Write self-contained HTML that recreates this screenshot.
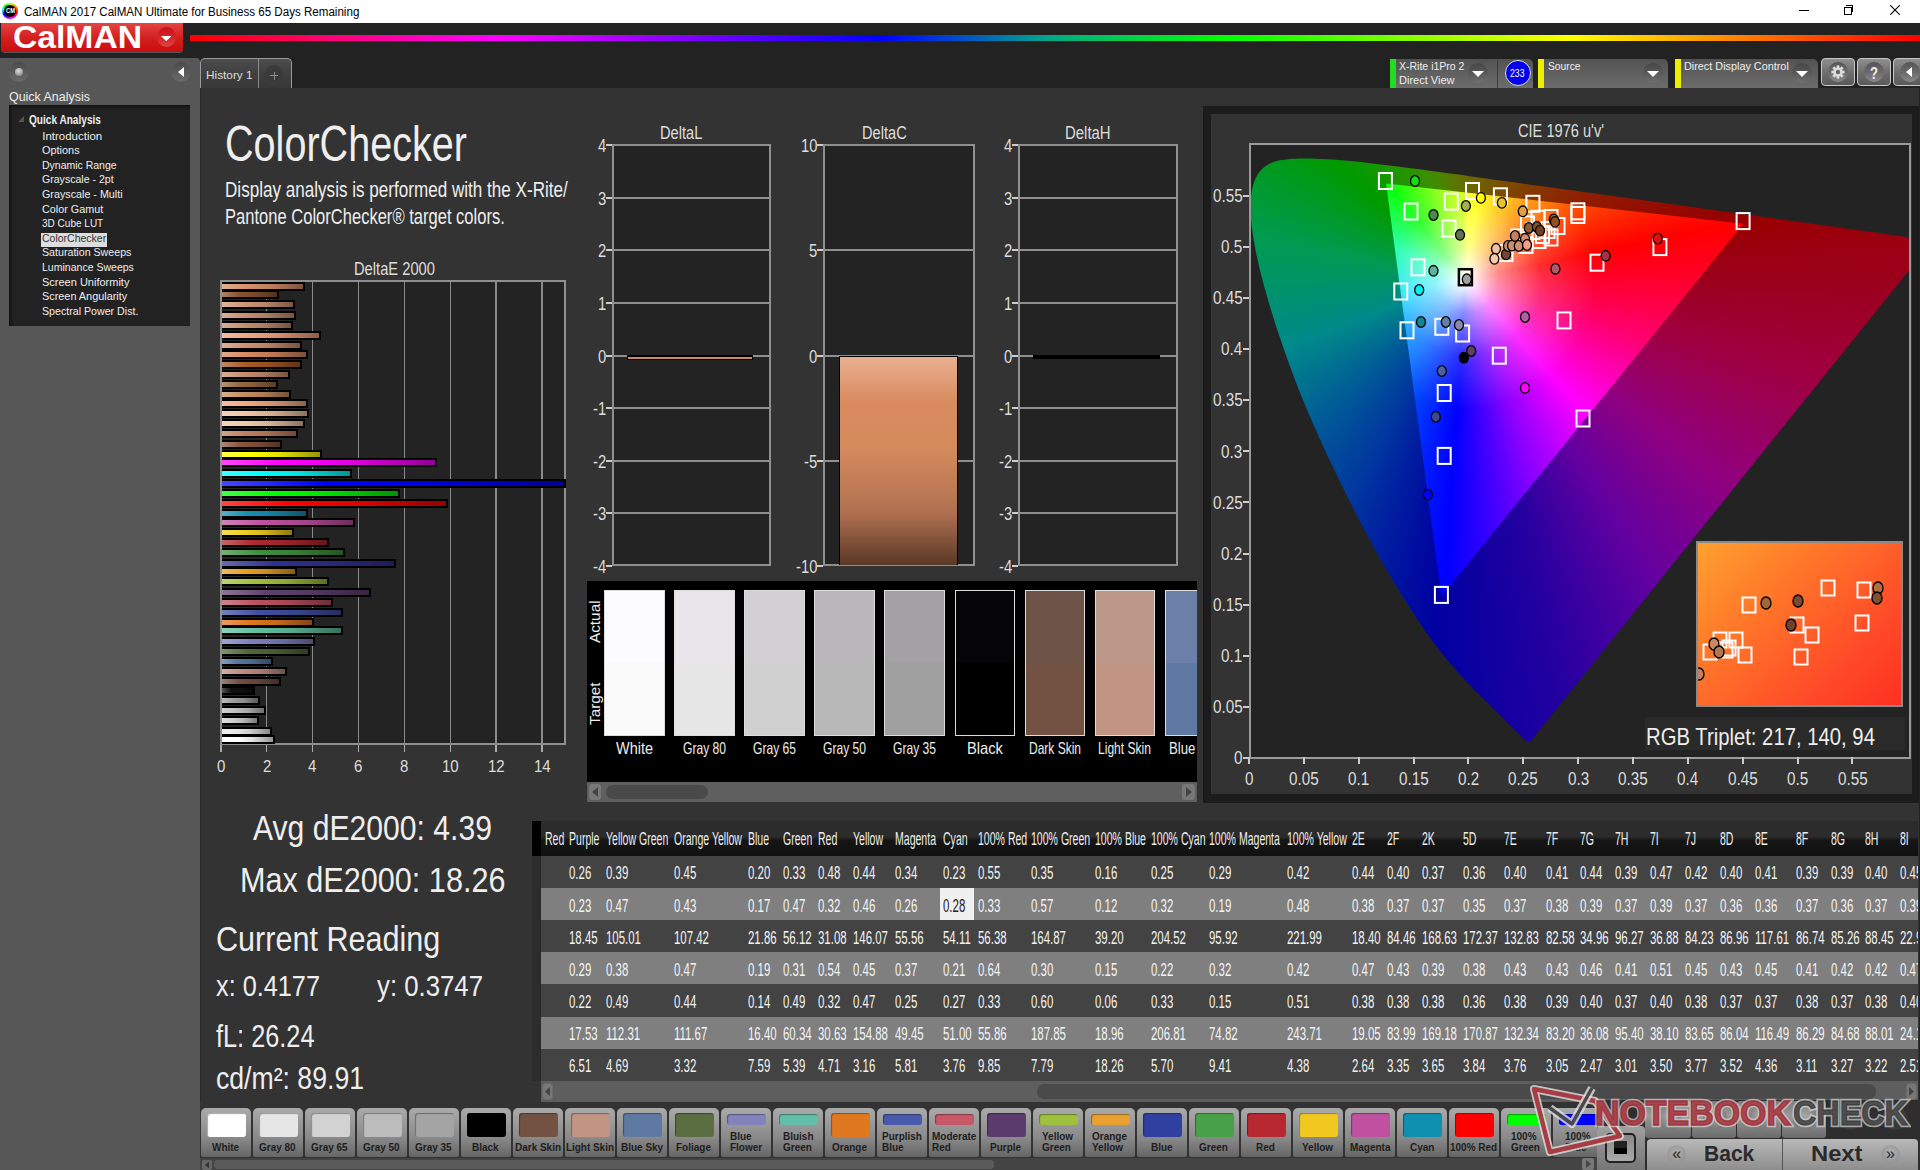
<!DOCTYPE html><html><head><meta charset="utf-8"><style>
html,body{margin:0;padding:0;width:1920px;height:1170px;overflow:hidden;background:#222;font-family:"Liberation Sans",sans-serif}
.a{position:absolute}
.t{position:absolute;line-height:1;white-space:nowrap;transform-origin:0 0}
</style></head><body>
<div class="a" style="left:0px;top:0px;width:1920px;height:23px;background:#fff"></div>
<div class="a" style="left:2px;top:3px;width:16px;height:16px;border-radius:50%;background:conic-gradient(#bf0 0deg,#f80 50deg,#f00 100deg,#f0f 170deg,#80f 210deg,#00f 240deg,#0ff 280deg,#0f0 320deg,#bf0 360deg)"></div>
<div class="a" style="left:4px;top:5px;width:12px;height:12px;border-radius:50%;background:#000"></div>
<div class="t" style="left:5.50px;top:7.13px;font-size:7.99px;color:#fff;font-weight:bold;transform:scaleX(0.7239);">CM</div>
<div class="t" style="left:23.50px;top:5.66px;font-size:12.21px;color:#000;transform:scaleX(0.9490);">CalMAN 2017 CalMAN Ultimate for Business 65 Days Remaining</div>
<div class="a" style="left:1799px;top:10px;width:10px;height:1px;background:#000"></div>
<div class="a" style="left:1844px;top:7px;width:6px;height:6px;border:1px solid #000"></div>
<div class="a" style="left:1846px;top:5px;width:6px;height:6px;border-top:1px solid #000;border-right:1px solid #000"></div>
<svg class="a" style="left:1890px;top:5px" width="10" height="10"><path d="M0.3 0.3L9.7 9.7M9.7 0.3L0.3 9.7" stroke="#000" stroke-width="1.1"/></svg>
<div class="a" style="left:0px;top:23px;width:1920px;height:34px;background:#222"></div>
<div class="a" style="left:1px;top:23px;width:182px;height:29px;border-radius:0 0 4px 4px;background:linear-gradient(#e54444,#d42020 50%,#c80e0e);box-shadow:0 1px 0 #555"></div>
<div class="t" style="left:13.30px;top:21.54px;font-size:31.83px;color:#fff;font-weight:bold;transform:scaleX(1.0572);">CalMAN</div>
<div class="a" style="left:156.5px;top:27px;width:19px;height:20px;border-radius:50%;background:linear-gradient(#c80f1c,#d62428 50%,#e04444)"></div>
<svg class="a" style="left:160.8px;top:36px" width="10.5" height="5.2"><path d="M0 0H10.5L5.25 5.2Z" fill="#fff"/></svg>
<div class="a" style="left:190px;top:35px;width:1730px;height:5.6px;background:linear-gradient(90deg,#f00 0%,#f0f 17.7%,#00f 40%,#0a8 49.7%,#0f0 60%,#ff0 79.8%,#f80 89%,#f00 100%)"></div>
<div class="a" style="left:0;top:58px;width:200px;height:1112px;background:#575757;border-radius:0 4px 0 0"></div>
<div class="a" style="left:9px;top:62px;width:20px;height:20px;border-radius:50%;background:linear-gradient(#4c4c4c,#5a5a5a 50%,#6a6a6a)"></div>
<div class="a" style="left:15px;top:68px;width:7.5px;height:7.5px;border-radius:50%;background:radial-gradient(circle at 45% 35%,#ddd,#888 80%)"></div>
<div class="a" style="left:171px;top:62px;width:20px;height:20px;border-radius:50%;background:linear-gradient(#4c4c4c,#5a5a5a 50%,#6a6a6a)"></div>
<svg class="a" style="left:177.5px;top:66.5px" width="6" height="10"><path d="M6 0V10L0 5Z" fill="#fff"/></svg>
<div class="t" style="left:9.20px;top:90.98px;font-size:12.06px;color:#eee;transform:scaleX(1.0326);">Quick Analysis</div>
<div class="a" style="left:9px;top:105px;width:181px;height:221px;background:#222;box-shadow:inset 2px 2px 3px #111"></div>
<svg class="a" style="left:18px;top:116px" width="6" height="6"><path d="M6 0V6H0Z" fill="#555"/></svg>
<div class="t" style="left:29.10px;top:114.18px;font-size:12.06px;color:#eee;font-weight:bold;transform:scaleX(0.8367);">Quick Analysis</div>
<div class="t" style="left:42.30px;top:130.57px;font-size:11.48px;color:#eee;">Introduction</div>
<div class="t" style="left:42.30px;top:145.17px;font-size:11.48px;color:#eee;transform:scaleX(0.9527);">Options</div>
<div class="t" style="left:42.30px;top:159.77px;font-size:11.48px;color:#eee;transform:scaleX(0.9144);">Dynamic Range</div>
<div class="t" style="left:42.30px;top:174.37px;font-size:11.48px;color:#eee;transform:scaleX(0.9209);">Grayscale - 2pt</div>
<div class="t" style="left:42.30px;top:188.97px;font-size:11.48px;color:#eee;transform:scaleX(0.9369);">Grayscale - Multi</div>
<div class="t" style="left:42.30px;top:203.57px;font-size:11.48px;color:#eee;transform:scaleX(0.9418);">Color Gamut</div>
<div class="t" style="left:42.30px;top:218.17px;font-size:11.48px;color:#eee;transform:scaleX(0.8732);">3D Cube LUT</div>
<div class="a" style="left:41px;top:233.10000000000002px;width:66px;height:14px;background:#ddd"></div>
<div class="t" style="left:42.30px;top:232.77px;font-size:11.48px;color:#333;transform:scaleX(0.9146);">ColorChecker</div>
<div class="t" style="left:42.30px;top:247.37px;font-size:11.48px;color:#eee;transform:scaleX(0.9286);">Saturation Sweeps</div>
<div class="t" style="left:42.30px;top:261.97px;font-size:11.48px;color:#eee;transform:scaleX(0.9180);">Luminance Sweeps</div>
<div class="t" style="left:42.30px;top:276.57px;font-size:11.48px;color:#eee;transform:scaleX(0.9589);">Screen Uniformity</div>
<div class="t" style="left:42.30px;top:291.17px;font-size:11.48px;color:#eee;transform:scaleX(0.9478);">Screen Angularity</div>
<div class="t" style="left:42.30px;top:305.77px;font-size:11.48px;color:#eee;transform:scaleX(0.9277);">Spectral Power Dist.</div>
<div class="a" style="left:200px;top:58px;width:92px;height:30px;border-radius:5px 5px 0 0;background:linear-gradient(#4c4c4c,#3e3e3e 60%,#383838);border:1px solid #9a9a9a;border-bottom:none;box-sizing:border-box"></div>
<div class="a" style="left:258px;top:59px;width:1px;height:29px;background:#8a8a8a"></div>
<div class="a" style="left:264px;top:65px;width:20px;height:20px;border-radius:50%;background:radial-gradient(circle at 50% 45%,#3a3a3a 50%,#434343)"></div>
<div class="a" style="left:270px;top:75px;width:8px;height:1px;background:#8a8a8a"></div>
<div class="a" style="left:273.5px;top:71.5px;width:1px;height:8px;background:#8a8a8a"></div>
<div class="t" style="left:206.40px;top:68.53px;font-size:11.77px;color:#ddd;transform:scaleX(1.0032);">History 1</div>
<div class="a" style="left:200px;top:88px;width:1719px;height:1082px;background:#333"></div>
<div class="a" style="left:200px;top:88px;width:1px;height:1082px;background:#2a2a2a"></div>
<div class="t" style="left:225.00px;top:119.34px;font-size:49.42px;color:#eee;transform:scaleX(0.8010);">ColorChecker</div>
<div class="t" style="left:225.00px;top:178.69px;font-size:22.09px;color:#eee;transform:scaleX(0.7738);">Display analysis is performed with the X-Rite/</div>
<div class="t" style="left:225.00px;top:206.09px;font-size:22.09px;color:#eee;transform:scaleX(0.7494);">Pantone ColorChecker® target colors.</div>
<div class="t" style="left:353.50px;top:260.01px;font-size:18.17px;color:#ddd;transform:scaleX(0.8100);">DeltaE 2000</div>
<div class="a" style="left:221px;top:281px;width:345px;height:464px;background:#232323"></div>
<div class="a" style="left:265.95px;top:282px;width:1.5px;height:463px;background:#8a8a8a"></div>
<div class="a" style="left:311.85px;top:282px;width:1.5px;height:463px;background:#8a8a8a"></div>
<div class="a" style="left:357.75px;top:282px;width:1.5px;height:463px;background:#8a8a8a"></div>
<div class="a" style="left:403.65px;top:282px;width:1.5px;height:463px;background:#8a8a8a"></div>
<div class="a" style="left:449.55px;top:282px;width:1.5px;height:463px;background:#8a8a8a"></div>
<div class="a" style="left:495.45px;top:282px;width:1.5px;height:463px;background:#8a8a8a"></div>
<div class="a" style="left:541.35px;top:282px;width:1.5px;height:463px;background:#8a8a8a"></div>
<div class="a" style="left:220px;top:280px;width:346px;height:465px;border:2px solid #8f8f8f;box-sizing:border-box;border-right-width:2px"></div>
<div class="a" style="left:222px;top:282.4px;width:82.5px;height:8.2px;background:#000"></div>
<div class="a" style="left:222px;top:284.0px;width:80.5px;height:5px;background:linear-gradient(90deg,#e4af92,#d99068 30%,#bf7f5c 60%,#7e543c)"></div>
<div class="a" style="left:222px;top:290.4px;width:56.7px;height:8.2px;background:#000"></div>
<div class="a" style="left:222px;top:292.0px;width:54.7px;height:5px;background:linear-gradient(90deg,#ab856a,#8a5530 30%,#794b2a 60%,#50311c)"></div>
<div class="a" style="left:222px;top:300.4px;width:73.1px;height:8.2px;background:#000"></div>
<div class="a" style="left:222px;top:302.0px;width:71.1px;height:5px;background:linear-gradient(90deg,#ddb59e,#d09878 30%,#b7866a 60%,#795846)"></div>
<div class="a" style="left:222px;top:311.4px;width:74.2px;height:8.2px;background:#000"></div>
<div class="a" style="left:222px;top:313.0px;width:72.2px;height:5px;background:linear-gradient(90deg,#d7af98,#c89070 30%,#b07f63 60%,#745441)"></div>
<div class="a" style="left:222px;top:321.4px;width:70.5px;height:8.2px;background:#000"></div>
<div class="a" style="left:222px;top:323.0px;width:68.5px;height:5px;background:linear-gradient(90deg,#d5af98,#c49070 30%,#ac7f63 60%,#725441)"></div>
<div class="a" style="left:222px;top:331.4px;width:99.3px;height:8.2px;background:#000"></div>
<div class="a" style="left:222px;top:333.0px;width:97.3px;height:5px;background:linear-gradient(90deg,#f4bba4,#f0a080 30%,#d38d71 60%,#8b5d4a)"></div>
<div class="a" style="left:222px;top:341.4px;width:80.0px;height:8.2px;background:#000"></div>
<div class="a" style="left:222px;top:343.0px;width:78.0px;height:5px;background:linear-gradient(90deg,#ddaf98,#d09070 30%,#b77f63 60%,#795441)"></div>
<div class="a" style="left:222px;top:350.4px;width:85.7px;height:8.2px;background:#000"></div>
<div class="a" style="left:222px;top:352.0px;width:83.7px;height:5px;background:linear-gradient(90deg,#e3a98d,#d88860 30%,#be7854 60%,#7d4f38)"></div>
<div class="a" style="left:222px;top:360.4px;width:79.5px;height:8.2px;background:#000"></div>
<div class="a" style="left:222px;top:362.0px;width:77.5px;height:5px;background:linear-gradient(90deg,#c08864,#a85a28 30%,#944f23 60%,#613417)"></div>
<div class="a" style="left:222px;top:370.4px;width:68.2px;height:8.2px;background:#000"></div>
<div class="a" style="left:222px;top:372.0px;width:66.2px;height:5px;background:linear-gradient(90deg,#d7af98,#c89070 30%,#b07f63 60%,#745441)"></div>
<div class="a" style="left:222px;top:380.4px;width:55.8px;height:8.2px;background:#000"></div>
<div class="a" style="left:222px;top:382.0px;width:53.8px;height:5px;background:linear-gradient(90deg,#b69475,#9a6a40 30%,#885d38 60%,#593d25)"></div>
<div class="a" style="left:222px;top:390.4px;width:69.1px;height:8.2px;background:#000"></div>
<div class="a" style="left:222px;top:392.0px;width:67.1px;height:5px;background:linear-gradient(90deg,#d7af8d,#c89060 30%,#b07f54 60%,#745438)"></div>
<div class="a" style="left:222px;top:399.4px;width:85.5px;height:8.2px;background:#000"></div>
<div class="a" style="left:222px;top:401.0px;width:83.5px;height:5px;background:linear-gradient(90deg,#f4c0a4,#f0a880 30%,#d39471 60%,#8b614a)"></div>
<div class="a" style="left:222px;top:409.4px;width:87.3px;height:8.2px;background:#000"></div>
<div class="a" style="left:222px;top:411.0px;width:85.3px;height:5px;background:linear-gradient(90deg,#f4d5bd,#f0c4a4 30%,#d3ac90 60%,#8b725f)"></div>
<div class="a" style="left:222px;top:419.4px;width:82.9px;height:8.2px;background:#000"></div>
<div class="a" style="left:222px;top:421.0px;width:80.9px;height:5px;background:linear-gradient(90deg,#f4d7c0,#f0c8a8 30%,#d3b094 60%,#8b7461)"></div>
<div class="a" style="left:222px;top:429.4px;width:76.1px;height:8.2px;background:#000"></div>
<div class="a" style="left:222px;top:431.0px;width:74.1px;height:5px;background:linear-gradient(90deg,#d2a48d,#c08060 30%,#a97154 60%,#6f4a38)"></div>
<div class="a" style="left:222px;top:440.4px;width:59.7px;height:8.2px;background:#000"></div>
<div class="a" style="left:222px;top:442.0px;width:57.7px;height:5px;background:linear-gradient(90deg,#ab8775,#8a5840 30%,#794d38 60%,#503325)"></div>
<div class="a" style="left:222px;top:450.4px;width:99.7px;height:8.2px;background:#000"></div>
<div class="a" style="left:222px;top:452.0px;width:97.7px;height:5px;background:linear-gradient(90deg,#ffff47,#ffff00 30%,#e0e000 60%,#949400)"></div>
<div class="a" style="left:222px;top:458.4px;width:215.4px;height:8.2px;background:#000"></div>
<div class="a" style="left:222px;top:460.0px;width:213.4px;height:5px;background:linear-gradient(90deg,#ff47ff,#ff00ff 30%,#e000e0 60%,#940094)"></div>
<div class="a" style="left:222px;top:469.4px;width:130.1px;height:8.2px;background:#000"></div>
<div class="a" style="left:222px;top:471.0px;width:128.1px;height:5px;background:linear-gradient(90deg,#47ffff,#00ffff 30%,#00e0e0 60%,#009494)"></div>
<div class="a" style="left:222px;top:479.4px;width:344.0px;height:8.2px;background:#000"></div>
<div class="a" style="left:222px;top:481.0px;width:342.0px;height:5px;background:linear-gradient(90deg,#4747ff,#0000ff 30%,#0000e0 60%,#000094)"></div>
<div class="a" style="left:222px;top:489.4px;width:178.2px;height:8.2px;background:#000"></div>
<div class="a" style="left:222px;top:491.0px;width:176.2px;height:5px;background:linear-gradient(90deg,#47ff47,#00ff00 30%,#00e000 60%,#009400)"></div>
<div class="a" style="left:222px;top:499.4px;width:225.5px;height:8.2px;background:#000"></div>
<div class="a" style="left:222px;top:501.0px;width:223.5px;height:5px;background:linear-gradient(90deg,#ff4747,#ff0000 30%,#e00000 60%,#940000)"></div>
<div class="a" style="left:222px;top:509.4px;width:85.5px;height:8.2px;background:#000"></div>
<div class="a" style="left:222px;top:511.0px;width:83.5px;height:5px;background:linear-gradient(90deg,#59afc6,#1890b0 30%,#157f9b 60%,#0e5466)"></div>
<div class="a" style="left:222px;top:518.4px;width:132.6px;height:8.2px;background:#000"></div>
<div class="a" style="left:222px;top:520.0px;width:130.6px;height:5px;background:linear-gradient(90deg,#d281bb,#c050a0 30%,#a9468d 60%,#6f2e5d)"></div>
<div class="a" style="left:222px;top:528.4px;width:71.7px;height:8.2px;background:#000"></div>
<div class="a" style="left:222px;top:530.0px;width:69.7px;height:5px;background:linear-gradient(90deg,#f4dd5e,#f0d020 30%,#d3b71c 60%,#8b7913)"></div>
<div class="a" style="left:222px;top:538.4px;width:107.3px;height:8.2px;background:#000"></div>
<div class="a" style="left:222px;top:540.0px;width:105.3px;height:5px;background:linear-gradient(90deg,#c6646a,#b02830 30%,#9b232a 60%,#66171c)"></div>
<div class="a" style="left:222px;top:548.4px;width:123.0px;height:8.2px;background:#000"></div>
<div class="a" style="left:222px;top:550.0px;width:121.0px;height:5px;background:linear-gradient(90deg,#75af75,#409040 30%,#387f38 60%,#255425)"></div>
<div class="a" style="left:222px;top:559.4px;width:173.6px;height:8.2px;background:#000"></div>
<div class="a" style="left:222px;top:561.0px;width:171.6px;height:5px;background:linear-gradient(90deg,#6a6aaf,#303090 30%,#2a2a7f 60%,#1c1c54)"></div>
<div class="a" style="left:222px;top:567.4px;width:75.4px;height:8.2px;background:#000"></div>
<div class="a" style="left:222px;top:569.0px;width:73.4px;height:5px;background:linear-gradient(90deg,#eebb5e,#e8a020 30%,#cc8d1c 60%,#875d13)"></div>
<div class="a" style="left:222px;top:577.4px;width:106.9px;height:8.2px;background:#000"></div>
<div class="a" style="left:222px;top:579.0px;width:104.9px;height:5px;background:linear-gradient(90deg,#bbd275,#a0c040 30%,#8da938 60%,#5d6f25)"></div>
<div class="a" style="left:222px;top:588.4px;width:148.7px;height:8.2px;background:#000"></div>
<div class="a" style="left:222px;top:590.0px;width:146.7px;height:5px;background:linear-gradient(90deg,#8d7598,#604070 30%,#543863 60%,#382541)"></div>
<div class="a" style="left:222px;top:598.4px;width:111.0px;height:8.2px;background:#000"></div>
<div class="a" style="left:222px;top:600.0px;width:109.0px;height:5px;background:linear-gradient(90deg,#d2818d,#c05060 30%,#a94654 60%,#6f2e38)"></div>
<div class="a" style="left:222px;top:608.4px;width:120.9px;height:8.2px;background:#000"></div>
<div class="a" style="left:222px;top:610.0px;width:118.9px;height:5px;background:linear-gradient(90deg,#7581bb,#4050a0 30%,#38468d 60%,#252e5d)"></div>
<div class="a" style="left:222px;top:618.4px;width:91.9px;height:8.2px;background:#000"></div>
<div class="a" style="left:222px;top:620.0px;width:89.9px;height:5px;background:linear-gradient(90deg,#e99e5e,#e07820 30%,#c56a1c 60%,#824613)"></div>
<div class="a" style="left:222px;top:626.4px;width:120.9px;height:8.2px;background:#000"></div>
<div class="a" style="left:222px;top:628.0px;width:118.9px;height:5px;background:linear-gradient(90deg,#8dd2bb,#60c0a0 30%,#54a98d 60%,#386f5d)"></div>
<div class="a" style="left:222px;top:637.4px;width:93.1px;height:8.2px;background:#000"></div>
<div class="a" style="left:222px;top:639.0px;width:91.1px;height:5px;background:linear-gradient(90deg,#a4a4d2,#8080c0 30%,#7171a9 60%,#4a4a6f)"></div>
<div class="a" style="left:222px;top:647.4px;width:88.0px;height:8.2px;background:#000"></div>
<div class="a" style="left:222px;top:649.0px;width:86.0px;height:5px;background:linear-gradient(90deg,#819270,#506838 30%,#465c31 60%,#2e3c20)"></div>
<div class="a" style="left:222px;top:657.4px;width:50.5px;height:8.2px;background:#000"></div>
<div class="a" style="left:222px;top:659.0px;width:48.5px;height:5px;background:linear-gradient(90deg,#879ebb,#5878a0 30%,#4d6a8d 60%,#33465d)"></div>
<div class="a" style="left:222px;top:667.4px;width:65.0px;height:8.2px;background:#000"></div>
<div class="a" style="left:222px;top:669.0px;width:63.0px;height:5px;background:linear-gradient(90deg,#d2afa4,#c09080 30%,#a97f71 60%,#6f544a)"></div>
<div class="a" style="left:222px;top:677.4px;width:59.0px;height:8.2px;background:#000"></div>
<div class="a" style="left:222px;top:679.0px;width:57.0px;height:5px;background:linear-gradient(90deg,#988175,#705040 30%,#634638 60%,#412e25)"></div>
<div class="a" style="left:222px;top:686.4px;width:33.0px;height:8.2px;background:#000"></div>
<div class="a" style="left:222px;top:688.0px;width:31.0px;height:5px;background:linear-gradient(90deg,#535353,#101010 30%,#0e0e0e 60%,#090909)"></div>
<div class="a" style="left:222px;top:696.4px;width:37.6px;height:8.2px;background:#000"></div>
<div class="a" style="left:222px;top:698.0px;width:35.6px;height:5px;background:linear-gradient(90deg,#bbbbbb,#a0a0a0 30%,#8d8d8d 60%,#5d5d5d)"></div>
<div class="a" style="left:222px;top:706.4px;width:44.1px;height:8.2px;background:#000"></div>
<div class="a" style="left:222px;top:708.0px;width:42.1px;height:5px;background:linear-gradient(90deg,#d2d2d2,#c0c0c0 30%,#a9a9a9 60%,#6f6f6f)"></div>
<div class="a" style="left:222px;top:716.4px;width:36.9px;height:8.2px;background:#000"></div>
<div class="a" style="left:222px;top:718.0px;width:34.9px;height:5px;background:linear-gradient(90deg,#dddddd,#d0d0d0 30%,#b7b7b7 60%,#797979)"></div>
<div class="a" style="left:222px;top:727.4px;width:50.1px;height:8.2px;background:#000"></div>
<div class="a" style="left:222px;top:729.0px;width:48.1px;height:5px;background:linear-gradient(90deg,#eeeeee,#e8e8e8 30%,#cccccc 60%,#878787)"></div>
<div class="a" style="left:222px;top:735.4px;width:52.6px;height:8.2px;background:#000"></div>
<div class="a" style="left:222px;top:737.0px;width:50.6px;height:5px;background:linear-gradient(90deg,#ffffff,#ffffff 30%,#e0e0e0 60%,#949494)"></div>
<div class="a" style="left:220.05px;top:745px;width:1.5px;height:7px;background:#aaa"></div>
<div class="t" style="left:216.62px;top:759.24px;font-size:16.72px;color:#ddd;transform:scaleX(0.9000);">0</div>
<div class="a" style="left:265.95px;top:745px;width:1.5px;height:7px;background:#aaa"></div>
<div class="t" style="left:262.52px;top:759.24px;font-size:16.72px;color:#ddd;transform:scaleX(0.9000);">2</div>
<div class="a" style="left:311.85px;top:745px;width:1.5px;height:7px;background:#aaa"></div>
<div class="t" style="left:308.42px;top:759.24px;font-size:16.72px;color:#ddd;transform:scaleX(0.9000);">4</div>
<div class="a" style="left:357.75px;top:745px;width:1.5px;height:7px;background:#aaa"></div>
<div class="t" style="left:354.32px;top:759.24px;font-size:16.72px;color:#ddd;transform:scaleX(0.9000);">6</div>
<div class="a" style="left:403.65px;top:745px;width:1.5px;height:7px;background:#aaa"></div>
<div class="t" style="left:400.22px;top:759.24px;font-size:16.72px;color:#ddd;transform:scaleX(0.9000);">8</div>
<div class="a" style="left:449.55px;top:745px;width:1.5px;height:7px;background:#aaa"></div>
<div class="t" style="left:441.93px;top:759.24px;font-size:16.72px;color:#ddd;transform:scaleX(0.9000);">10</div>
<div class="a" style="left:495.45px;top:745px;width:1.5px;height:7px;background:#aaa"></div>
<div class="t" style="left:487.83px;top:759.24px;font-size:16.72px;color:#ddd;transform:scaleX(0.9000);">12</div>
<div class="a" style="left:541.35px;top:745px;width:1.5px;height:7px;background:#aaa"></div>
<div class="t" style="left:533.73px;top:759.24px;font-size:16.72px;color:#ddd;transform:scaleX(0.9000);">14</div>
<div class="t" style="left:660.45px;top:124.40px;font-size:18.90px;color:#ddd;transform:scaleX(0.7744);">DeltaL</div>
<div class="a" style="left:612px;top:144px;width:157px;height:421px;background:#232323"></div>
<div class="a" style="left:612px;top:197px;width:157px;height:2px;background:#8f8f8f"></div>
<div class="a" style="left:612px;top:249px;width:157px;height:2px;background:#8f8f8f"></div>
<div class="a" style="left:612px;top:302px;width:157px;height:2px;background:#8f8f8f"></div>
<div class="a" style="left:612px;top:355px;width:157px;height:2px;background:#8f8f8f"></div>
<div class="a" style="left:612px;top:407px;width:157px;height:2px;background:#8f8f8f"></div>
<div class="a" style="left:612px;top:460px;width:157px;height:2px;background:#8f8f8f"></div>
<div class="a" style="left:612px;top:512px;width:157px;height:2px;background:#8f8f8f"></div>
<div class="a" style="left:612px;top:144px;width:159px;height:422px;border:2px solid #8f8f8f;box-sizing:border-box"></div>
<div class="a" style="left:606px;top:144px;width:6px;height:2px;background:#ccc"></div>
<div class="t" style="left:597.75px;top:137.63px;font-size:17.44px;color:#ddd;transform:scaleX(0.8500);">4</div>
<div class="a" style="left:606px;top:197px;width:6px;height:2px;background:#ccc"></div>
<div class="t" style="left:597.75px;top:190.63px;font-size:17.44px;color:#ddd;transform:scaleX(0.8500);">3</div>
<div class="a" style="left:606px;top:249px;width:6px;height:2px;background:#ccc"></div>
<div class="t" style="left:597.75px;top:242.63px;font-size:17.44px;color:#ddd;transform:scaleX(0.8500);">2</div>
<div class="a" style="left:606px;top:302px;width:6px;height:2px;background:#ccc"></div>
<div class="t" style="left:597.75px;top:295.63px;font-size:17.44px;color:#ddd;transform:scaleX(0.8500);">1</div>
<div class="a" style="left:606px;top:355px;width:6px;height:2px;background:#ccc"></div>
<div class="t" style="left:597.75px;top:348.63px;font-size:17.44px;color:#ddd;transform:scaleX(0.8500);">0</div>
<div class="a" style="left:606px;top:407px;width:6px;height:2px;background:#ccc"></div>
<div class="t" style="left:592.82px;top:400.63px;font-size:17.44px;color:#ddd;transform:scaleX(0.8500);">-1</div>
<div class="a" style="left:606px;top:460px;width:6px;height:2px;background:#ccc"></div>
<div class="t" style="left:592.82px;top:453.63px;font-size:17.44px;color:#ddd;transform:scaleX(0.8500);">-2</div>
<div class="a" style="left:606px;top:512px;width:6px;height:2px;background:#ccc"></div>
<div class="t" style="left:592.82px;top:505.63px;font-size:17.44px;color:#ddd;transform:scaleX(0.8500);">-3</div>
<div class="a" style="left:606px;top:565px;width:6px;height:2px;background:#ccc"></div>
<div class="t" style="left:592.82px;top:558.63px;font-size:17.44px;color:#ddd;transform:scaleX(0.8500);">-4</div>
<div class="t" style="left:862.35px;top:124.40px;font-size:18.90px;color:#ddd;transform:scaleX(0.7739);">DeltaC</div>
<div class="a" style="left:823px;top:144px;width:150px;height:421px;background:#232323"></div>
<div class="a" style="left:823px;top:249px;width:150px;height:2px;background:#8f8f8f"></div>
<div class="a" style="left:823px;top:355px;width:150px;height:2px;background:#8f8f8f"></div>
<div class="a" style="left:823px;top:460px;width:150px;height:2px;background:#8f8f8f"></div>
<div class="a" style="left:823px;top:144px;width:152px;height:422px;border:2px solid #8f8f8f;box-sizing:border-box"></div>
<div class="a" style="left:817px;top:144px;width:6px;height:2px;background:#ccc"></div>
<div class="t" style="left:800.51px;top:137.63px;font-size:17.44px;color:#ddd;transform:scaleX(0.8500);">10</div>
<div class="a" style="left:817px;top:249px;width:6px;height:2px;background:#ccc"></div>
<div class="t" style="left:808.75px;top:242.63px;font-size:17.44px;color:#ddd;transform:scaleX(0.8500);">5</div>
<div class="a" style="left:817px;top:355px;width:6px;height:2px;background:#ccc"></div>
<div class="t" style="left:808.75px;top:348.63px;font-size:17.44px;color:#ddd;transform:scaleX(0.8500);">0</div>
<div class="a" style="left:817px;top:460px;width:6px;height:2px;background:#ccc"></div>
<div class="t" style="left:803.82px;top:453.63px;font-size:17.44px;color:#ddd;transform:scaleX(0.8500);">-5</div>
<div class="a" style="left:817px;top:565px;width:6px;height:2px;background:#ccc"></div>
<div class="t" style="left:795.57px;top:558.63px;font-size:17.44px;color:#ddd;transform:scaleX(0.8500);">-10</div>
<div class="t" style="left:1065.00px;top:124.40px;font-size:18.90px;color:#ddd;transform:scaleX(0.7895);">DeltaH</div>
<div class="a" style="left:1018px;top:144px;width:158px;height:421px;background:#232323"></div>
<div class="a" style="left:1018px;top:197px;width:158px;height:2px;background:#8f8f8f"></div>
<div class="a" style="left:1018px;top:249px;width:158px;height:2px;background:#8f8f8f"></div>
<div class="a" style="left:1018px;top:302px;width:158px;height:2px;background:#8f8f8f"></div>
<div class="a" style="left:1018px;top:355px;width:158px;height:2px;background:#8f8f8f"></div>
<div class="a" style="left:1018px;top:407px;width:158px;height:2px;background:#8f8f8f"></div>
<div class="a" style="left:1018px;top:460px;width:158px;height:2px;background:#8f8f8f"></div>
<div class="a" style="left:1018px;top:512px;width:158px;height:2px;background:#8f8f8f"></div>
<div class="a" style="left:1018px;top:144px;width:160px;height:422px;border:2px solid #8f8f8f;box-sizing:border-box"></div>
<div class="a" style="left:1012px;top:144px;width:6px;height:2px;background:#ccc"></div>
<div class="t" style="left:1003.75px;top:137.63px;font-size:17.44px;color:#ddd;transform:scaleX(0.8500);">4</div>
<div class="a" style="left:1012px;top:197px;width:6px;height:2px;background:#ccc"></div>
<div class="t" style="left:1003.75px;top:190.63px;font-size:17.44px;color:#ddd;transform:scaleX(0.8500);">3</div>
<div class="a" style="left:1012px;top:249px;width:6px;height:2px;background:#ccc"></div>
<div class="t" style="left:1003.75px;top:242.63px;font-size:17.44px;color:#ddd;transform:scaleX(0.8500);">2</div>
<div class="a" style="left:1012px;top:302px;width:6px;height:2px;background:#ccc"></div>
<div class="t" style="left:1003.75px;top:295.63px;font-size:17.44px;color:#ddd;transform:scaleX(0.8500);">1</div>
<div class="a" style="left:1012px;top:355px;width:6px;height:2px;background:#ccc"></div>
<div class="t" style="left:1003.75px;top:348.63px;font-size:17.44px;color:#ddd;transform:scaleX(0.8500);">0</div>
<div class="a" style="left:1012px;top:407px;width:6px;height:2px;background:#ccc"></div>
<div class="t" style="left:998.82px;top:400.63px;font-size:17.44px;color:#ddd;transform:scaleX(0.8500);">-1</div>
<div class="a" style="left:1012px;top:460px;width:6px;height:2px;background:#ccc"></div>
<div class="t" style="left:998.82px;top:453.63px;font-size:17.44px;color:#ddd;transform:scaleX(0.8500);">-2</div>
<div class="a" style="left:1012px;top:512px;width:6px;height:2px;background:#ccc"></div>
<div class="t" style="left:998.82px;top:505.63px;font-size:17.44px;color:#ddd;transform:scaleX(0.8500);">-3</div>
<div class="a" style="left:1012px;top:565px;width:6px;height:2px;background:#ccc"></div>
<div class="t" style="left:998.82px;top:558.63px;font-size:17.44px;color:#ddd;transform:scaleX(0.8500);">-4</div>
<div class="a" style="left:627px;top:355px;width:126px;height:5px;background:#000"></div>
<div class="a" style="left:628px;top:357px;width:124px;height:1.5px;background:#d08860"></div>
<div class="a" style="left:839px;top:356px;width:119px;height:209px;background:linear-gradient(#000 0,#000 1px,#e8b090 1px,#d98b5e 22%,#d48a5c 45%,#b07050 75%,#5a3826 100%);border-left:1px solid #000;border-right:1px solid #000;box-sizing:border-box"></div>
<div class="a" style="left:1033px;top:355px;width:127px;height:4px;background:#000"></div>
<div class="a" style="left:587px;top:581px;width:610px;height:201px;background:#000"></div>
<div class="t" style="left:588.29px;top:642.80px;font-size:14.53px;color:#eee;transform:rotate(-90deg) scaleX(1.0545)">Actual</div>
<div class="t" style="left:588.29px;top:725.00px;font-size:14.53px;color:#eee;transform:rotate(-90deg) scaleX(1.0521)">Target</div>
<div class="a" style="left:604.0px;top:589.5px;width:60.6px;height:146px;overflow:hidden"><div style="position:absolute;left:0;top:0;width:60.6px;height:146px;box-sizing:border-box;border:1.5px solid #ddd;background:linear-gradient(#fcfbff 50%,#fafafa 50%)"></div></div>
<div class="a" style="left:674.1px;top:589.5px;width:60.6px;height:146px;overflow:hidden"><div style="position:absolute;left:0;top:0;width:60.6px;height:146px;box-sizing:border-box;border:1.5px solid #ddd;background:linear-gradient(#e8e6ea 50%,#e6e6e6 50%)"></div></div>
<div class="a" style="left:744.2px;top:589.5px;width:60.6px;height:146px;overflow:hidden"><div style="position:absolute;left:0;top:0;width:60.6px;height:146px;box-sizing:border-box;border:1.5px solid #ddd;background:linear-gradient(#d2d0d3 50%,#d0d0d0 50%)"></div></div>
<div class="a" style="left:814.3px;top:589.5px;width:60.6px;height:146px;overflow:hidden"><div style="position:absolute;left:0;top:0;width:60.6px;height:146px;box-sizing:border-box;border:1.5px solid #ddd;background:linear-gradient(#bab8bb 50%,#b8b8b8 50%)"></div></div>
<div class="a" style="left:884.4px;top:589.5px;width:60.6px;height:146px;overflow:hidden"><div style="position:absolute;left:0;top:0;width:60.6px;height:146px;box-sizing:border-box;border:1.5px solid #ddd;background:linear-gradient(#a3a1a3 50%,#a0a0a0 50%)"></div></div>
<div class="a" style="left:954.5px;top:589.5px;width:60.6px;height:146px;overflow:hidden"><div style="position:absolute;left:0;top:0;width:60.6px;height:146px;box-sizing:border-box;border:1.5px solid #ddd;background:linear-gradient(#050508 50%,#000000 50%)"></div></div>
<div class="a" style="left:1024.6px;top:589.5px;width:60.6px;height:146px;overflow:hidden"><div style="position:absolute;left:0;top:0;width:60.6px;height:146px;box-sizing:border-box;border:1.5px solid #ddd;background:linear-gradient(#6e5448 50%,#735244 50%)"></div></div>
<div class="a" style="left:1094.7px;top:589.5px;width:60.6px;height:146px;overflow:hidden"><div style="position:absolute;left:0;top:0;width:60.6px;height:146px;box-sizing:border-box;border:1.5px solid #ddd;background:linear-gradient(#bd9888 50%,#c29582 50%)"></div></div>
<div class="a" style="left:1164.8px;top:589.5px;width:32.2px;height:146px;overflow:hidden"><div style="position:absolute;left:0;top:0;width:60.6px;height:146px;box-sizing:border-box;border:1.5px solid #ddd;background:linear-gradient(#6a80a8 50%,#5e7aa2 50%)"></div></div>
<div class="a" style="left:587px;top:782px;width:610px;height:20px;background:#5f5f5f"></div>
<div class="a" style="left:589px;top:784px;width:12px;height:16px;border-radius:3px;background:#777"></div>
<div class="a" style="left:606px;top:785px;width:102px;height:14px;border-radius:7px;background:#4a4a4a"></div>
<div class="a" style="left:1182px;top:784px;width:13px;height:16px;border-radius:3px;background:#777"></div>
<svg class="a" style="left:592px;top:787px" width="6" height="10"><path d="M6 0V10L0 5Z" fill="#444"/></svg>
<svg class="a" style="left:1186px;top:787px" width="6" height="10"><path d="M0 0V10L6 5Z" fill="#444"/></svg>
<div class="a" style="left:587px;top:581px;width:610px;height:200px;overflow:hidden">
<div class="t" style="left:28.60px;top:159.64px;font-size:16.72px;color:#eee;transform:scaleX(0.8660);">White</div>
<div class="t" style="left:96.00px;top:159.64px;font-size:16.72px;color:#eee;transform:scaleX(0.7232);">Gray 80</div>
<div class="t" style="left:166.00px;top:159.64px;font-size:16.72px;color:#eee;transform:scaleX(0.7232);">Gray 65</div>
<div class="t" style="left:236.00px;top:159.64px;font-size:16.72px;color:#eee;transform:scaleX(0.7232);">Gray 50</div>
<div class="t" style="left:306.00px;top:159.64px;font-size:16.72px;color:#eee;transform:scaleX(0.7232);">Gray 35</div>
<div class="t" style="left:379.50px;top:159.64px;font-size:16.72px;color:#eee;transform:scaleX(0.8808);">Black</div>
<div class="t" style="left:441.50px;top:159.64px;font-size:16.72px;color:#eee;transform:scaleX(0.7177);">Dark Skin</div>
<div class="t" style="left:511.00px;top:159.64px;font-size:16.72px;color:#eee;transform:scaleX(0.7220);">Light Skin</div>
<div class="t" style="left:581.50px;top:159.64px;font-size:16.72px;color:#eee;transform:scaleX(0.7883);">Blue Sky</div>
</div>
<div class="a" style="left:1203px;top:106px;width:716px;height:697px;background:#1c1c1c"></div>
<div class="a" style="left:1211px;top:114px;width:701px;height:680px;background:#333"></div>
<div class="t" style="left:1518.00px;top:121.90px;font-size:18.90px;color:#ddd;transform:scaleX(0.7734);">CIE 1976 u'v'</div>
<div class="a" style="left:1250px;top:144px;width:659px;height:613px;background:#232323;overflow:hidden">
<div class="a" style="left:0;top:0;width:659px;height:613px;background:conic-gradient(from 0deg at 216px 136px,#6a6a00 0deg,#883400 40deg,#980000 78deg,#a00040 105deg,#900080 128deg,#6400a0 148deg,#2200a0 168deg,#0000a0 185deg,#0038a0 208deg,#008a8a 250deg,#009a50 282deg,#009a00 312deg,#3a9000 340deg,#6a6a00 360deg);clip-path:path('M280.8 596.9 C280.6 597.0 280.4 597.5 279.6 597.4 C278.7 597.4 277.5 597.6 275.7 596.5 C273.9 595.3 272.2 593.7 269.0 590.6 C265.8 587.5 262.0 583.6 256.5 578.1 C251.0 572.6 241.8 563.4 236.1 557.6 C230.3 551.8 227.2 548.8 222.0 543.4 C216.8 537.9 211.1 532.1 204.9 524.8 C198.6 517.4 192.3 510.3 184.4 499.5 C176.4 488.6 167.0 475.3 157.1 459.5 C147.1 443.8 136.0 425.4 124.8 405.0 C113.6 384.6 101.3 360.7 89.8 337.2 C78.4 313.7 66.2 287.8 56.2 263.8 C46.2 239.8 37.2 215.0 29.9 193.4 C22.5 171.8 16.5 151.3 12.0 134.0 C7.5 116.7 4.7 102.3 2.8 89.9 C0.9 77.4 0.3 67.8 0.6 59.1 C0.8 50.5 2.1 43.8 4.1 38.0 C6.1 32.3 9.1 28.0 12.5 24.6 C15.8 21.2 20.0 19.3 24.4 17.8 C28.7 16.2 33.6 15.8 38.5 15.3 C43.4 14.7 48.7 14.7 53.9 14.6 C59.1 14.6 64.2 14.7 69.6 14.9 C74.9 15.0 80.3 15.4 85.9 15.8 C91.6 16.2 97.4 16.7 103.5 17.3 C109.6 17.9 115.9 18.6 122.6 19.4 C129.3 20.2 136.3 21.0 143.7 22.0 C151.1 22.9 158.8 23.9 167.0 25.0 C175.1 26.1 183.7 27.2 192.7 28.5 C201.8 29.7 211.2 31.0 221.2 32.4 C231.2 33.8 241.6 35.2 252.6 36.7 C263.5 38.2 274.9 39.8 286.8 41.5 C298.6 43.1 311.0 44.9 323.6 46.6 C336.3 48.4 349.4 50.2 362.6 52.0 C375.8 53.9 389.6 55.8 402.8 57.6 C416.0 59.5 423.2 60.5 441.7 63.0 C460.1 65.6 492.3 70.1 513.6 73.0 C535.0 76.0 548.8 77.9 569.7 80.8 C590.5 83.7 619.7 87.8 638.6 90.4 C657.4 93.0 675.5 95.5 682.8 96.6 Z')"></div>
<div class="a" style="left:0;top:0;width:659px;height:613px;background:radial-gradient(circle at 216px 136px,#fff 0,rgba(255,255,255,.92) 8px,rgba(255,255,255,.55) 32px,rgba(255,255,255,.18) 75px,rgba(255,255,255,0) 130px),conic-gradient(from 0deg at 216px 136px,#ffff00 8deg,#ff8a00 40deg,#ff0000 78deg,#ff0070 108deg,#ff00ff 138deg,#8800ff 162deg,#0000ff 184deg,#0070ff 215deg,#00e0ff 260deg,#00ffa0 295deg,#00ff00 321deg,#90ff00 345deg,#ffff00 368deg);clip-path:polygon(493.4px 79.8px,136.1px 39.4px,191.4px 452.5px)"></div>
</div>
<div class="a" style="left:1249px;top:143px;width:662px;height:616px;border:2px solid #9a9a9a;border-right-width:2px;box-sizing:border-box"></div>
<div class="a" style="left:1243px;top:757px;width:6px;height:2px;background:#ccc"></div>
<div class="t" style="left:1234.22px;top:748.84px;font-size:18.60px;color:#ddd;transform:scaleX(0.8200);">0</div>
<div class="a" style="left:1243px;top:706px;width:6px;height:2px;background:#ccc"></div>
<div class="t" style="left:1213.01px;top:697.79px;font-size:18.60px;color:#ddd;transform:scaleX(0.8200);">0.05</div>
<div class="a" style="left:1243px;top:655px;width:6px;height:2px;background:#ccc"></div>
<div class="t" style="left:1221.49px;top:646.74px;font-size:18.60px;color:#ddd;transform:scaleX(0.8200);">0.1</div>
<div class="a" style="left:1243px;top:604px;width:6px;height:2px;background:#ccc"></div>
<div class="t" style="left:1213.01px;top:595.69px;font-size:18.60px;color:#ddd;transform:scaleX(0.8200);">0.15</div>
<div class="a" style="left:1243px;top:553px;width:6px;height:2px;background:#ccc"></div>
<div class="t" style="left:1221.49px;top:544.64px;font-size:18.60px;color:#ddd;transform:scaleX(0.8200);">0.2</div>
<div class="a" style="left:1243px;top:501px;width:6px;height:2px;background:#ccc"></div>
<div class="t" style="left:1213.01px;top:493.59px;font-size:18.60px;color:#ddd;transform:scaleX(0.8200);">0.25</div>
<div class="a" style="left:1243px;top:450px;width:6px;height:2px;background:#ccc"></div>
<div class="t" style="left:1221.49px;top:442.54px;font-size:18.60px;color:#ddd;transform:scaleX(0.8200);">0.3</div>
<div class="a" style="left:1243px;top:399px;width:6px;height:2px;background:#ccc"></div>
<div class="t" style="left:1213.01px;top:391.49px;font-size:18.60px;color:#ddd;transform:scaleX(0.8200);">0.35</div>
<div class="a" style="left:1243px;top:348px;width:6px;height:2px;background:#ccc"></div>
<div class="t" style="left:1221.49px;top:340.44px;font-size:18.60px;color:#ddd;transform:scaleX(0.8200);">0.4</div>
<div class="a" style="left:1243px;top:297px;width:6px;height:2px;background:#ccc"></div>
<div class="t" style="left:1213.01px;top:289.39px;font-size:18.60px;color:#ddd;transform:scaleX(0.8200);">0.45</div>
<div class="a" style="left:1243px;top:246px;width:6px;height:2px;background:#ccc"></div>
<div class="t" style="left:1221.49px;top:238.34px;font-size:18.60px;color:#ddd;transform:scaleX(0.8200);">0.5</div>
<div class="a" style="left:1243px;top:195px;width:6px;height:2px;background:#ccc"></div>
<div class="t" style="left:1213.01px;top:187.29px;font-size:18.60px;color:#ddd;transform:scaleX(0.8200);">0.55</div>
<div class="a" style="left:1248px;top:757px;width:2px;height:7px;background:#ccc"></div>
<div class="t" style="left:1244.76px;top:770.24px;font-size:18.60px;color:#ddd;transform:scaleX(0.8200);">0</div>
<div class="a" style="left:1303px;top:757px;width:2px;height:7px;background:#ccc"></div>
<div class="t" style="left:1289.00px;top:770.24px;font-size:18.60px;color:#ddd;transform:scaleX(0.8200);">0.05</div>
<div class="a" style="left:1358px;top:757px;width:2px;height:7px;background:#ccc"></div>
<div class="t" style="left:1348.10px;top:770.24px;font-size:18.60px;color:#ddd;transform:scaleX(0.8200);">0.1</div>
<div class="a" style="left:1413px;top:757px;width:2px;height:7px;background:#ccc"></div>
<div class="t" style="left:1398.70px;top:770.24px;font-size:18.60px;color:#ddd;transform:scaleX(0.8200);">0.15</div>
<div class="a" style="left:1467px;top:757px;width:2px;height:7px;background:#ccc"></div>
<div class="t" style="left:1457.80px;top:770.24px;font-size:18.60px;color:#ddd;transform:scaleX(0.8200);">0.2</div>
<div class="a" style="left:1522px;top:757px;width:2px;height:7px;background:#ccc"></div>
<div class="t" style="left:1508.40px;top:770.24px;font-size:18.60px;color:#ddd;transform:scaleX(0.8200);">0.25</div>
<div class="a" style="left:1577px;top:757px;width:2px;height:7px;background:#ccc"></div>
<div class="t" style="left:1567.50px;top:770.24px;font-size:18.60px;color:#ddd;transform:scaleX(0.8200);">0.3</div>
<div class="a" style="left:1632px;top:757px;width:2px;height:7px;background:#ccc"></div>
<div class="t" style="left:1618.10px;top:770.24px;font-size:18.60px;color:#ddd;transform:scaleX(0.8200);">0.35</div>
<div class="a" style="left:1687px;top:757px;width:2px;height:7px;background:#ccc"></div>
<div class="t" style="left:1677.20px;top:770.24px;font-size:18.60px;color:#ddd;transform:scaleX(0.8200);">0.4</div>
<div class="a" style="left:1742px;top:757px;width:2px;height:7px;background:#ccc"></div>
<div class="t" style="left:1727.80px;top:770.24px;font-size:18.60px;color:#ddd;transform:scaleX(0.8200);">0.45</div>
<div class="a" style="left:1797px;top:757px;width:2px;height:7px;background:#ccc"></div>
<div class="t" style="left:1786.90px;top:770.24px;font-size:18.60px;color:#ddd;transform:scaleX(0.8200);">0.5</div>
<div class="a" style="left:1851px;top:757px;width:2px;height:7px;background:#ccc"></div>
<div class="t" style="left:1837.50px;top:770.24px;font-size:18.60px;color:#ddd;transform:scaleX(0.8200);">0.55</div>
<svg class="a" style="left:1250px;top:144px;overflow:hidden" width="659" height="613"><rect x="128.9" y="29.0" width="13" height="16" fill="none" stroke="#fff" stroke-width="2"/><rect x="216.0" y="39.0" width="13" height="16" fill="none" stroke="#fff" stroke-width="2"/><rect x="243.9" y="44.3" width="13" height="16" fill="none" stroke="#fff" stroke-width="2"/><rect x="276.4" y="51.8" width="13" height="16" fill="none" stroke="#fff" stroke-width="2"/><rect x="321.4" y="59.3" width="13" height="16" fill="none" stroke="#fff" stroke-width="2"/><rect x="321.4" y="63.0" width="13" height="16" fill="none" stroke="#fff" stroke-width="2"/><rect x="194.8" y="49.6" width="13" height="16" fill="none" stroke="#fff" stroke-width="2"/><rect x="154.5" y="59.5" width="13" height="16" fill="none" stroke="#fff" stroke-width="2"/><rect x="192.5" y="76.5" width="13" height="16" fill="none" stroke="#fff" stroke-width="2"/><rect x="161.5" y="115.3" width="13" height="16" fill="none" stroke="#fff" stroke-width="2"/><rect x="144.3" y="139.5" width="13" height="16" fill="none" stroke="#fff" stroke-width="2"/><rect x="150.5" y="178.3" width="13" height="16" fill="none" stroke="#fff" stroke-width="2"/><rect x="185.3" y="174.8" width="13" height="16" fill="none" stroke="#fff" stroke-width="2"/><rect x="206.1" y="181.5" width="13" height="16" fill="none" stroke="#fff" stroke-width="2"/><rect x="242.8" y="203.7" width="13" height="16" fill="none" stroke="#fff" stroke-width="2"/><rect x="340.5" y="110.7" width="13" height="16" fill="none" stroke="#fff" stroke-width="2"/><rect x="307.5" y="168.4" width="13" height="16" fill="none" stroke="#fff" stroke-width="2"/><rect x="187.7" y="241.0" width="13" height="16" fill="none" stroke="#fff" stroke-width="2"/><rect x="187.7" y="303.9" width="13" height="16" fill="none" stroke="#fff" stroke-width="2"/><rect x="326.5" y="266.5" width="13" height="16" fill="none" stroke="#fff" stroke-width="2"/><rect x="403.4" y="95.1" width="13" height="16" fill="none" stroke="#fff" stroke-width="2"/><rect x="486.6" y="69.1" width="13" height="16" fill="none" stroke="#fff" stroke-width="2"/><rect x="184.9" y="442.9" width="13" height="16" fill="none" stroke="#fff" stroke-width="2"/><rect x="249.5" y="101.0" width="13" height="16" fill="none" stroke="#fff" stroke-width="2"/><rect x="261.5" y="85.5" width="13" height="16" fill="none" stroke="#fff" stroke-width="2"/><rect x="271.0" y="72.4" width="13" height="16" fill="none" stroke="#fff" stroke-width="2"/><rect x="281.5" y="66.8" width="13" height="16" fill="none" stroke="#fff" stroke-width="2"/><rect x="294.5" y="66.0" width="13" height="16" fill="none" stroke="#fff" stroke-width="2"/><rect x="301.5" y="74.0" width="13" height="16" fill="none" stroke="#fff" stroke-width="2"/><rect x="294.5" y="85.5" width="13" height="16" fill="none" stroke="#fff" stroke-width="2"/><rect x="282.5" y="88.0" width="13" height="16" fill="none" stroke="#fff" stroke-width="2"/><rect x="269.5" y="93.0" width="13" height="16" fill="none" stroke="#fff" stroke-width="2"/><rect x="286.0" y="83.0" width="13" height="16" fill="none" stroke="#fff" stroke-width="2"/><rect x="276.5" y="79.0" width="13" height="16" fill="none" stroke="#fff" stroke-width="2"/><rect x="291.5" y="78.0" width="13" height="16" fill="none" stroke="#fff" stroke-width="2"/><rect x="208.9" y="125.2" width="13" height="16" fill="none" stroke="#000" stroke-width="2.5"/><ellipse cx="165.0" cy="37.0" rx="4.5" ry="5.3" fill="#10e010" stroke="#000" stroke-width="1.3"/><ellipse cx="230.9" cy="53.9" rx="4.5" ry="5.3" fill="#ffff00" stroke="#000" stroke-width="1.3"/><ellipse cx="215.9" cy="62.0" rx="4.5" ry="5.3" fill="#a0b050" stroke="#000" stroke-width="1.3"/><ellipse cx="183.5" cy="71.0" rx="4.5" ry="5.3" fill="#4a8a50" stroke="#000" stroke-width="1.3"/><ellipse cx="251.9" cy="58.9" rx="4.5" ry="5.3" fill="#e8c030" stroke="#000" stroke-width="1.3"/><ellipse cx="210.0" cy="90.8" rx="4.5" ry="5.3" fill="#607050" stroke="#000" stroke-width="1.3"/><ellipse cx="272.8" cy="67.3" rx="4.5" ry="5.3" fill="#e0a040" stroke="#000" stroke-width="1.3"/><ellipse cx="303.8" cy="75.4" rx="4.5" ry="5.3" fill="#a06030" stroke="#000" stroke-width="1.3"/><ellipse cx="305.0" cy="77.9" rx="4.5" ry="5.3" fill="#905020" stroke="#000" stroke-width="1.3"/><ellipse cx="183.5" cy="126.8" rx="4.5" ry="5.3" fill="#60b0a0" stroke="#000" stroke-width="1.3"/><ellipse cx="169.2" cy="146.0" rx="4.5" ry="5.3" fill="#00f0f0" stroke="#000" stroke-width="1.3"/><ellipse cx="216.8" cy="135.3" rx="4.5" ry="5.3" fill="#a0a0a0" stroke="#000" stroke-width="1.3"/><ellipse cx="305.4" cy="124.9" rx="4.5" ry="5.3" fill="#b05868" stroke="#000" stroke-width="1.3"/><ellipse cx="355.7" cy="111.8" rx="4.5" ry="5.3" fill="#a83040" stroke="#000" stroke-width="1.3"/><ellipse cx="407.7" cy="94.6" rx="4.5" ry="5.3" fill="#e01010" stroke="#000" stroke-width="1.3"/><ellipse cx="171.0" cy="178.0" rx="4.5" ry="5.3" fill="#108890" stroke="#000" stroke-width="1.3"/><ellipse cx="195.8" cy="178.0" rx="4.5" ry="5.3" fill="#6080a0" stroke="#000" stroke-width="1.3"/><ellipse cx="209.0" cy="181.0" rx="4.5" ry="5.3" fill="#8888b0" stroke="#000" stroke-width="1.3"/><ellipse cx="221.2" cy="207.0" rx="4.5" ry="5.3" fill="#604060" stroke="#000" stroke-width="1.3"/><ellipse cx="213.8" cy="213.8" rx="4.5" ry="5.3" fill="#000" stroke="#000" stroke-width="1.3"/><ellipse cx="191.8" cy="227.0" rx="4.5" ry="5.3" fill="#5060a0" stroke="#000" stroke-width="1.3"/><ellipse cx="275.0" cy="173.0" rx="4.5" ry="5.3" fill="#b060a0" stroke="#000" stroke-width="1.3"/><ellipse cx="275.0" cy="244.0" rx="4.5" ry="5.3" fill="#ff00ff" stroke="#000" stroke-width="1.3"/><ellipse cx="185.8" cy="272.9" rx="4.5" ry="5.3" fill="#404890" stroke="#000" stroke-width="1.3"/><ellipse cx="177.8" cy="350.6" rx="4.5" ry="5.3" fill="#0000ff" stroke="#000" stroke-width="1.3"/><ellipse cx="246.0" cy="104.8" rx="4.5" ry="5.3" fill="#f0c0a0" stroke="#000" stroke-width="1.3"/><ellipse cx="244.4" cy="114.8" rx="4.5" ry="5.3" fill="#f8c8a8" stroke="#000" stroke-width="1.3"/><ellipse cx="256.0" cy="110.4" rx="4.5" ry="5.3" fill="#704838" stroke="#000" stroke-width="1.3"/><ellipse cx="258.0" cy="102.0" rx="4.5" ry="5.3" fill="#c89070" stroke="#000" stroke-width="1.3"/><ellipse cx="262.0" cy="101.6" rx="4.5" ry="5.3" fill="#c89070" stroke="#000" stroke-width="1.3"/><ellipse cx="265.0" cy="92.0" rx="4.5" ry="5.3" fill="#c08060" stroke="#000" stroke-width="1.3"/><ellipse cx="268.8" cy="102.0" rx="4.5" ry="5.3" fill="#d09070" stroke="#000" stroke-width="1.3"/><ellipse cx="275.0" cy="94.8" rx="4.5" ry="5.3" fill="#d09070" stroke="#000" stroke-width="1.3"/><ellipse cx="277.0" cy="101.0" rx="4.5" ry="5.3" fill="#f0a080" stroke="#000" stroke-width="1.3"/><ellipse cx="278.8" cy="84.0" rx="4.5" ry="5.3" fill="#905a38" stroke="#000" stroke-width="1.3"/><ellipse cx="286.9" cy="83.0" rx="4.5" ry="5.3" fill="#805030" stroke="#000" stroke-width="1.3"/><ellipse cx="290.0" cy="86.6" rx="4.5" ry="5.3" fill="#704020" stroke="#000" stroke-width="1.3"/></svg>
<div class="a" style="left:1696px;top:541px;width:207px;height:166px;border:2px solid #8a8a8a;box-sizing:border-box;background:linear-gradient(135deg,#ffa030 0%,#ff7028 40%,#ff4828 75%,#ff3020 100%);overflow:hidden"></div>
<svg class="a" style="left:1698px;top:543px" width="203" height="162"><rect x="44.5" y="54.5" width="13" height="15" fill="none" stroke="#fff" stroke-width="2"/><rect x="31.5" y="89.5" width="13" height="15" fill="none" stroke="#fff" stroke-width="2"/><rect x="15.5" y="89.5" width="13" height="15" fill="none" stroke="#fff" stroke-width="2"/><rect x="40.5" y="104.5" width="13" height="15" fill="none" stroke="#fff" stroke-width="2"/><rect x="24.5" y="97.5" width="13" height="15" fill="none" stroke="#fff" stroke-width="2"/><rect x="21.5" y="99.5" width="13" height="15" fill="none" stroke="#fff" stroke-width="2"/><rect x="5.5" y="101.5" width="13" height="15" fill="none" stroke="#fff" stroke-width="2"/><rect x="96.5" y="106.5" width="13" height="15" fill="none" stroke="#fff" stroke-width="2"/><rect x="92.5" y="74.5" width="13" height="15" fill="none" stroke="#fff" stroke-width="2"/><rect x="107.5" y="84.5" width="13" height="15" fill="none" stroke="#fff" stroke-width="2"/><rect x="123.5" y="37.5" width="13" height="15" fill="none" stroke="#fff" stroke-width="2"/><rect x="159.5" y="39.5" width="13" height="15" fill="none" stroke="#fff" stroke-width="2"/><rect x="157.5" y="72.5" width="13" height="15" fill="none" stroke="#fff" stroke-width="2"/><ellipse cx="68" cy="60" rx="5" ry="6" fill="#a06838" stroke="#000" stroke-width="1.3"/><ellipse cx="100" cy="58" rx="5" ry="6" fill="#7a4a30" stroke="#000" stroke-width="1.3"/><ellipse cx="93" cy="82" rx="5" ry="6" fill="#704028" stroke="#000" stroke-width="1.3"/><ellipse cx="180" cy="45" rx="5" ry="6" fill="#b07040" stroke="#000" stroke-width="1.3"/><ellipse cx="179" cy="55" rx="5" ry="6" fill="#805030" stroke="#000" stroke-width="1.3"/><ellipse cx="16" cy="101" rx="5" ry="6" fill="#c88a60" stroke="#000" stroke-width="1.3"/><ellipse cx="21" cy="109" rx="5" ry="6" fill="#b07850" stroke="#000" stroke-width="1.3"/><ellipse cx="1" cy="131" rx="5" ry="6" fill="#c08060" stroke="#000" stroke-width="1.3"/></svg>
<div class="a" style="left:1645px;top:717px;width:260px;height:33px;background:#2a2a2a"></div>
<div class="t" style="left:1646.00px;top:724.97px;font-size:24.71px;color:#eee;transform:scaleX(0.8213);">RGB Triplet: 217, 140, 94</div>
<div class="t" style="left:252.80px;top:811.11px;font-size:35.76px;color:#eee;transform:scaleX(0.8426);">Avg dE2000: 4.39</div>
<div class="t" style="left:240.00px;top:862.81px;font-size:35.76px;color:#eee;transform:scaleX(0.8562);">Max dE2000: 18.26</div>
<div class="t" style="left:215.70px;top:921.85px;font-size:34.88px;color:#eee;transform:scaleX(0.8767);">Current Reading</div>
<div class="t" style="left:215.70px;top:971.04px;font-size:29.94px;color:#eee;transform:scaleX(0.8442);">x: 0.4177</div>
<div class="t" style="left:376.50px;top:971.04px;font-size:29.94px;color:#eee;transform:scaleX(0.8605);">y: 0.3747</div>
<div class="t" style="left:215.70px;top:1020.93px;font-size:31.25px;color:#eee;transform:scaleX(0.8098);">fL: 26.24</div>
<div class="t" style="left:215.70px;top:1062.73px;font-size:31.25px;color:#eee;transform:scaleX(0.8521);">cd/m²: 89.91</div>
<div class="a" style="left:532px;top:821px;width:1386px;height:260px;overflow:hidden;background:#333">
<div class="a" style="left:0px;top:0px;width:1386px;height:35px;background:linear-gradient(#2c2c2c 0,#2c2c2c 45%,#151515 55%,#111 100%)"></div>
<div class="a" style="left:0px;top:0px;width:9px;height:35px;background:#000"></div>
<div class="a" style="left:9px;top:35px;width:1377px;height:32px;background:#434343"></div>
<div class="a" style="left:0px;top:35px;width:9px;height:32px;background:#2c2c2c"></div>
<div class="a" style="left:9px;top:67px;width:1377px;height:32px;background:#7f7f7f"></div>
<div class="a" style="left:0px;top:67px;width:9px;height:32px;background:#2c2c2c"></div>
<div class="a" style="left:9px;top:99px;width:1377px;height:32px;background:#434343"></div>
<div class="a" style="left:0px;top:99px;width:9px;height:32px;background:#2c2c2c"></div>
<div class="a" style="left:9px;top:131px;width:1377px;height:32px;background:#7f7f7f"></div>
<div class="a" style="left:0px;top:131px;width:9px;height:32px;background:#2c2c2c"></div>
<div class="a" style="left:9px;top:163px;width:1377px;height:33px;background:#434343"></div>
<div class="a" style="left:0px;top:163px;width:9px;height:33px;background:#2c2c2c"></div>
<div class="a" style="left:9px;top:196px;width:1377px;height:32px;background:#7f7f7f"></div>
<div class="a" style="left:0px;top:196px;width:9px;height:32px;background:#2c2c2c"></div>
<div class="a" style="left:9px;top:228px;width:1377px;height:32px;background:#434343"></div>
<div class="a" style="left:0px;top:228px;width:9px;height:32px;background:#2c2c2c"></div>
<div class="a" style="left:408px;top:67px;width:34px;height:32px;background:#f0f0f0"></div>
<div class="t" style="left:12.60px;top:8.53px;font-size:18.02px;color:#eee;transform:scaleX(0.5850);">Red</div>
<div class="t" style="left:36.90px;top:8.53px;font-size:18.02px;color:#eee;transform:scaleX(0.5850);">Purple</div>
<div class="t" style="left:73.60px;top:8.53px;font-size:18.02px;color:#eee;transform:scaleX(0.5850);">Yellow Green</div>
<div class="t" style="left:142.00px;top:8.53px;font-size:18.02px;color:#eee;transform:scaleX(0.5850);">Orange Yellow</div>
<div class="t" style="left:216.20px;top:8.53px;font-size:18.02px;color:#eee;transform:scaleX(0.5850);">Blue</div>
<div class="t" style="left:251.40px;top:8.53px;font-size:18.02px;color:#eee;transform:scaleX(0.5850);">Green</div>
<div class="t" style="left:286.40px;top:8.53px;font-size:18.02px;color:#eee;transform:scaleX(0.5850);">Red</div>
<div class="t" style="left:321.00px;top:8.53px;font-size:18.02px;color:#eee;transform:scaleX(0.5850);">Yellow</div>
<div class="t" style="left:362.60px;top:8.53px;font-size:18.02px;color:#eee;transform:scaleX(0.5850);">Magenta</div>
<div class="t" style="left:410.70px;top:8.53px;font-size:18.02px;color:#eee;transform:scaleX(0.5850);">Cyan</div>
<div class="t" style="left:445.70px;top:8.53px;font-size:18.02px;color:#eee;transform:scaleX(0.5850);">100% Red</div>
<div class="t" style="left:498.50px;top:8.53px;font-size:18.02px;color:#eee;transform:scaleX(0.5850);">100% Green</div>
<div class="t" style="left:563.00px;top:8.53px;font-size:18.02px;color:#eee;transform:scaleX(0.5850);">100% Blue</div>
<div class="t" style="left:618.90px;top:8.53px;font-size:18.02px;color:#eee;transform:scaleX(0.5850);">100% Cyan</div>
<div class="t" style="left:676.80px;top:8.53px;font-size:18.02px;color:#eee;transform:scaleX(0.5850);">100% Magenta</div>
<div class="t" style="left:754.70px;top:8.53px;font-size:18.02px;color:#eee;transform:scaleX(0.5850);">100% Yellow</div>
<div class="t" style="left:820.30px;top:8.53px;font-size:18.02px;color:#eee;transform:scaleX(0.5850);">2E</div>
<div class="t" style="left:855.00px;top:8.53px;font-size:18.02px;color:#eee;transform:scaleX(0.5850);">2F</div>
<div class="t" style="left:889.60px;top:8.53px;font-size:18.02px;color:#eee;transform:scaleX(0.5850);">2K</div>
<div class="t" style="left:931.20px;top:8.53px;font-size:18.02px;color:#eee;transform:scaleX(0.5850);">5D</div>
<div class="t" style="left:972.40px;top:8.53px;font-size:18.02px;color:#eee;transform:scaleX(0.5850);">7E</div>
<div class="t" style="left:1013.60px;top:8.53px;font-size:18.02px;color:#eee;transform:scaleX(0.5850);">7F</div>
<div class="t" style="left:1048.20px;top:8.53px;font-size:18.02px;color:#eee;transform:scaleX(0.5850);">7G</div>
<div class="t" style="left:1082.80px;top:8.53px;font-size:18.02px;color:#eee;transform:scaleX(0.5850);">7H</div>
<div class="t" style="left:1118.20px;top:8.53px;font-size:18.02px;color:#eee;transform:scaleX(0.5850);">7I</div>
<div class="t" style="left:1152.80px;top:8.53px;font-size:18.02px;color:#eee;transform:scaleX(0.5850);">7J</div>
<div class="t" style="left:1187.50px;top:8.53px;font-size:18.02px;color:#eee;transform:scaleX(0.5850);">8D</div>
<div class="t" style="left:1222.80px;top:8.53px;font-size:18.02px;color:#eee;transform:scaleX(0.5850);">8E</div>
<div class="t" style="left:1264.00px;top:8.53px;font-size:18.02px;color:#eee;transform:scaleX(0.5850);">8F</div>
<div class="t" style="left:1298.60px;top:8.53px;font-size:18.02px;color:#eee;transform:scaleX(0.5850);">8G</div>
<div class="t" style="left:1333.30px;top:8.53px;font-size:18.02px;color:#eee;transform:scaleX(0.5850);">8H</div>
<div class="t" style="left:1368.00px;top:8.53px;font-size:18.02px;color:#eee;transform:scaleX(0.5850);">8I</div>
<div class="t" style="left:36.90px;top:43.40px;font-size:18.90px;color:#f4f4f4;transform:scaleX(0.6050);">0.26</div>
<div class="t" style="left:73.60px;top:43.40px;font-size:18.90px;color:#f4f4f4;transform:scaleX(0.6050);">0.39</div>
<div class="t" style="left:142.00px;top:43.40px;font-size:18.90px;color:#f4f4f4;transform:scaleX(0.6050);">0.45</div>
<div class="t" style="left:216.20px;top:43.40px;font-size:18.90px;color:#f4f4f4;transform:scaleX(0.6050);">0.20</div>
<div class="t" style="left:251.40px;top:43.40px;font-size:18.90px;color:#f4f4f4;transform:scaleX(0.6050);">0.33</div>
<div class="t" style="left:286.40px;top:43.40px;font-size:18.90px;color:#f4f4f4;transform:scaleX(0.6050);">0.48</div>
<div class="t" style="left:321.00px;top:43.40px;font-size:18.90px;color:#f4f4f4;transform:scaleX(0.6050);">0.44</div>
<div class="t" style="left:362.60px;top:43.40px;font-size:18.90px;color:#f4f4f4;transform:scaleX(0.6050);">0.34</div>
<div class="t" style="left:410.70px;top:43.40px;font-size:18.90px;color:#f4f4f4;transform:scaleX(0.6050);">0.23</div>
<div class="t" style="left:445.70px;top:43.40px;font-size:18.90px;color:#f4f4f4;transform:scaleX(0.6050);">0.55</div>
<div class="t" style="left:498.50px;top:43.40px;font-size:18.90px;color:#f4f4f4;transform:scaleX(0.6050);">0.35</div>
<div class="t" style="left:563.00px;top:43.40px;font-size:18.90px;color:#f4f4f4;transform:scaleX(0.6050);">0.16</div>
<div class="t" style="left:618.90px;top:43.40px;font-size:18.90px;color:#f4f4f4;transform:scaleX(0.6050);">0.25</div>
<div class="t" style="left:676.80px;top:43.40px;font-size:18.90px;color:#f4f4f4;transform:scaleX(0.6050);">0.29</div>
<div class="t" style="left:754.70px;top:43.40px;font-size:18.90px;color:#f4f4f4;transform:scaleX(0.6050);">0.42</div>
<div class="t" style="left:820.30px;top:43.40px;font-size:18.90px;color:#f4f4f4;transform:scaleX(0.6050);">0.44</div>
<div class="t" style="left:855.00px;top:43.40px;font-size:18.90px;color:#f4f4f4;transform:scaleX(0.6050);">0.40</div>
<div class="t" style="left:889.60px;top:43.40px;font-size:18.90px;color:#f4f4f4;transform:scaleX(0.6050);">0.37</div>
<div class="t" style="left:931.20px;top:43.40px;font-size:18.90px;color:#f4f4f4;transform:scaleX(0.6050);">0.36</div>
<div class="t" style="left:972.40px;top:43.40px;font-size:18.90px;color:#f4f4f4;transform:scaleX(0.6050);">0.40</div>
<div class="t" style="left:1013.60px;top:43.40px;font-size:18.90px;color:#f4f4f4;transform:scaleX(0.6050);">0.41</div>
<div class="t" style="left:1048.20px;top:43.40px;font-size:18.90px;color:#f4f4f4;transform:scaleX(0.6050);">0.44</div>
<div class="t" style="left:1082.80px;top:43.40px;font-size:18.90px;color:#f4f4f4;transform:scaleX(0.6050);">0.39</div>
<div class="t" style="left:1118.20px;top:43.40px;font-size:18.90px;color:#f4f4f4;transform:scaleX(0.6050);">0.47</div>
<div class="t" style="left:1152.80px;top:43.40px;font-size:18.90px;color:#f4f4f4;transform:scaleX(0.6050);">0.42</div>
<div class="t" style="left:1187.50px;top:43.40px;font-size:18.90px;color:#f4f4f4;transform:scaleX(0.6050);">0.40</div>
<div class="t" style="left:1222.80px;top:43.40px;font-size:18.90px;color:#f4f4f4;transform:scaleX(0.6050);">0.41</div>
<div class="t" style="left:1264.00px;top:43.40px;font-size:18.90px;color:#f4f4f4;transform:scaleX(0.6050);">0.39</div>
<div class="t" style="left:1298.60px;top:43.40px;font-size:18.90px;color:#f4f4f4;transform:scaleX(0.6050);">0.39</div>
<div class="t" style="left:1333.30px;top:43.40px;font-size:18.90px;color:#f4f4f4;transform:scaleX(0.6050);">0.40</div>
<div class="t" style="left:1368.00px;top:43.40px;font-size:18.90px;color:#f4f4f4;transform:scaleX(0.6050);">0.45</div>
<div class="t" style="left:36.90px;top:75.50px;font-size:18.90px;color:#f4f4f4;transform:scaleX(0.6050);">0.23</div>
<div class="t" style="left:73.60px;top:75.50px;font-size:18.90px;color:#f4f4f4;transform:scaleX(0.6050);">0.47</div>
<div class="t" style="left:142.00px;top:75.50px;font-size:18.90px;color:#f4f4f4;transform:scaleX(0.6050);">0.43</div>
<div class="t" style="left:216.20px;top:75.50px;font-size:18.90px;color:#f4f4f4;transform:scaleX(0.6050);">0.17</div>
<div class="t" style="left:251.40px;top:75.50px;font-size:18.90px;color:#f4f4f4;transform:scaleX(0.6050);">0.47</div>
<div class="t" style="left:286.40px;top:75.50px;font-size:18.90px;color:#f4f4f4;transform:scaleX(0.6050);">0.32</div>
<div class="t" style="left:321.00px;top:75.50px;font-size:18.90px;color:#f4f4f4;transform:scaleX(0.6050);">0.46</div>
<div class="t" style="left:362.60px;top:75.50px;font-size:18.90px;color:#f4f4f4;transform:scaleX(0.6050);">0.26</div>
<div class="t" style="left:410.70px;top:75.50px;font-size:18.90px;color:#222;transform:scaleX(0.6050);">0.28</div>
<div class="t" style="left:445.70px;top:75.50px;font-size:18.90px;color:#f4f4f4;transform:scaleX(0.6050);">0.33</div>
<div class="t" style="left:498.50px;top:75.50px;font-size:18.90px;color:#f4f4f4;transform:scaleX(0.6050);">0.57</div>
<div class="t" style="left:563.00px;top:75.50px;font-size:18.90px;color:#f4f4f4;transform:scaleX(0.6050);">0.12</div>
<div class="t" style="left:618.90px;top:75.50px;font-size:18.90px;color:#f4f4f4;transform:scaleX(0.6050);">0.32</div>
<div class="t" style="left:676.80px;top:75.50px;font-size:18.90px;color:#f4f4f4;transform:scaleX(0.6050);">0.19</div>
<div class="t" style="left:754.70px;top:75.50px;font-size:18.90px;color:#f4f4f4;transform:scaleX(0.6050);">0.48</div>
<div class="t" style="left:820.30px;top:75.50px;font-size:18.90px;color:#f4f4f4;transform:scaleX(0.6050);">0.38</div>
<div class="t" style="left:855.00px;top:75.50px;font-size:18.90px;color:#f4f4f4;transform:scaleX(0.6050);">0.37</div>
<div class="t" style="left:889.60px;top:75.50px;font-size:18.90px;color:#f4f4f4;transform:scaleX(0.6050);">0.37</div>
<div class="t" style="left:931.20px;top:75.50px;font-size:18.90px;color:#f4f4f4;transform:scaleX(0.6050);">0.35</div>
<div class="t" style="left:972.40px;top:75.50px;font-size:18.90px;color:#f4f4f4;transform:scaleX(0.6050);">0.37</div>
<div class="t" style="left:1013.60px;top:75.50px;font-size:18.90px;color:#f4f4f4;transform:scaleX(0.6050);">0.38</div>
<div class="t" style="left:1048.20px;top:75.50px;font-size:18.90px;color:#f4f4f4;transform:scaleX(0.6050);">0.39</div>
<div class="t" style="left:1082.80px;top:75.50px;font-size:18.90px;color:#f4f4f4;transform:scaleX(0.6050);">0.37</div>
<div class="t" style="left:1118.20px;top:75.50px;font-size:18.90px;color:#f4f4f4;transform:scaleX(0.6050);">0.39</div>
<div class="t" style="left:1152.80px;top:75.50px;font-size:18.90px;color:#f4f4f4;transform:scaleX(0.6050);">0.37</div>
<div class="t" style="left:1187.50px;top:75.50px;font-size:18.90px;color:#f4f4f4;transform:scaleX(0.6050);">0.36</div>
<div class="t" style="left:1222.80px;top:75.50px;font-size:18.90px;color:#f4f4f4;transform:scaleX(0.6050);">0.36</div>
<div class="t" style="left:1264.00px;top:75.50px;font-size:18.90px;color:#f4f4f4;transform:scaleX(0.6050);">0.37</div>
<div class="t" style="left:1298.60px;top:75.50px;font-size:18.90px;color:#f4f4f4;transform:scaleX(0.6050);">0.36</div>
<div class="t" style="left:1333.30px;top:75.50px;font-size:18.90px;color:#f4f4f4;transform:scaleX(0.6050);">0.37</div>
<div class="t" style="left:1368.00px;top:75.50px;font-size:18.90px;color:#f4f4f4;transform:scaleX(0.6050);">0.39</div>
<div class="t" style="left:36.90px;top:107.60px;font-size:18.90px;color:#f4f4f4;transform:scaleX(0.6050);">18.45</div>
<div class="t" style="left:73.60px;top:107.60px;font-size:18.90px;color:#f4f4f4;transform:scaleX(0.6050);">105.01</div>
<div class="t" style="left:142.00px;top:107.60px;font-size:18.90px;color:#f4f4f4;transform:scaleX(0.6050);">107.42</div>
<div class="t" style="left:216.20px;top:107.60px;font-size:18.90px;color:#f4f4f4;transform:scaleX(0.6050);">21.86</div>
<div class="t" style="left:251.40px;top:107.60px;font-size:18.90px;color:#f4f4f4;transform:scaleX(0.6050);">56.12</div>
<div class="t" style="left:286.40px;top:107.60px;font-size:18.90px;color:#f4f4f4;transform:scaleX(0.6050);">31.08</div>
<div class="t" style="left:321.00px;top:107.60px;font-size:18.90px;color:#f4f4f4;transform:scaleX(0.6050);">146.07</div>
<div class="t" style="left:362.60px;top:107.60px;font-size:18.90px;color:#f4f4f4;transform:scaleX(0.6050);">55.56</div>
<div class="t" style="left:410.70px;top:107.60px;font-size:18.90px;color:#f4f4f4;transform:scaleX(0.6050);">54.11</div>
<div class="t" style="left:445.70px;top:107.60px;font-size:18.90px;color:#f4f4f4;transform:scaleX(0.6050);">56.38</div>
<div class="t" style="left:498.50px;top:107.60px;font-size:18.90px;color:#f4f4f4;transform:scaleX(0.6050);">164.87</div>
<div class="t" style="left:563.00px;top:107.60px;font-size:18.90px;color:#f4f4f4;transform:scaleX(0.6050);">39.20</div>
<div class="t" style="left:618.90px;top:107.60px;font-size:18.90px;color:#f4f4f4;transform:scaleX(0.6050);">204.52</div>
<div class="t" style="left:676.80px;top:107.60px;font-size:18.90px;color:#f4f4f4;transform:scaleX(0.6050);">95.92</div>
<div class="t" style="left:754.70px;top:107.60px;font-size:18.90px;color:#f4f4f4;transform:scaleX(0.6050);">221.99</div>
<div class="t" style="left:820.30px;top:107.60px;font-size:18.90px;color:#f4f4f4;transform:scaleX(0.6050);">18.40</div>
<div class="t" style="left:855.00px;top:107.60px;font-size:18.90px;color:#f4f4f4;transform:scaleX(0.6050);">84.46</div>
<div class="t" style="left:889.60px;top:107.60px;font-size:18.90px;color:#f4f4f4;transform:scaleX(0.6050);">168.63</div>
<div class="t" style="left:931.20px;top:107.60px;font-size:18.90px;color:#f4f4f4;transform:scaleX(0.6050);">172.37</div>
<div class="t" style="left:972.40px;top:107.60px;font-size:18.90px;color:#f4f4f4;transform:scaleX(0.6050);">132.83</div>
<div class="t" style="left:1013.60px;top:107.60px;font-size:18.90px;color:#f4f4f4;transform:scaleX(0.6050);">82.58</div>
<div class="t" style="left:1048.20px;top:107.60px;font-size:18.90px;color:#f4f4f4;transform:scaleX(0.6050);">34.96</div>
<div class="t" style="left:1082.80px;top:107.60px;font-size:18.90px;color:#f4f4f4;transform:scaleX(0.6050);">96.27</div>
<div class="t" style="left:1118.20px;top:107.60px;font-size:18.90px;color:#f4f4f4;transform:scaleX(0.6050);">36.88</div>
<div class="t" style="left:1152.80px;top:107.60px;font-size:18.90px;color:#f4f4f4;transform:scaleX(0.6050);">84.23</div>
<div class="t" style="left:1187.50px;top:107.60px;font-size:18.90px;color:#f4f4f4;transform:scaleX(0.6050);">86.96</div>
<div class="t" style="left:1222.80px;top:107.60px;font-size:18.90px;color:#f4f4f4;transform:scaleX(0.6050);">117.61</div>
<div class="t" style="left:1264.00px;top:107.60px;font-size:18.90px;color:#f4f4f4;transform:scaleX(0.6050);">86.74</div>
<div class="t" style="left:1298.60px;top:107.60px;font-size:18.90px;color:#f4f4f4;transform:scaleX(0.6050);">85.26</div>
<div class="t" style="left:1333.30px;top:107.60px;font-size:18.90px;color:#f4f4f4;transform:scaleX(0.6050);">88.45</div>
<div class="t" style="left:1368.00px;top:107.60px;font-size:18.90px;color:#f4f4f4;transform:scaleX(0.6050);">22.92</div>
<div class="t" style="left:36.90px;top:139.70px;font-size:18.90px;color:#f4f4f4;transform:scaleX(0.6050);">0.29</div>
<div class="t" style="left:73.60px;top:139.70px;font-size:18.90px;color:#f4f4f4;transform:scaleX(0.6050);">0.38</div>
<div class="t" style="left:142.00px;top:139.70px;font-size:18.90px;color:#f4f4f4;transform:scaleX(0.6050);">0.47</div>
<div class="t" style="left:216.20px;top:139.70px;font-size:18.90px;color:#f4f4f4;transform:scaleX(0.6050);">0.19</div>
<div class="t" style="left:251.40px;top:139.70px;font-size:18.90px;color:#f4f4f4;transform:scaleX(0.6050);">0.31</div>
<div class="t" style="left:286.40px;top:139.70px;font-size:18.90px;color:#f4f4f4;transform:scaleX(0.6050);">0.54</div>
<div class="t" style="left:321.00px;top:139.70px;font-size:18.90px;color:#f4f4f4;transform:scaleX(0.6050);">0.45</div>
<div class="t" style="left:362.60px;top:139.70px;font-size:18.90px;color:#f4f4f4;transform:scaleX(0.6050);">0.37</div>
<div class="t" style="left:410.70px;top:139.70px;font-size:18.90px;color:#f4f4f4;transform:scaleX(0.6050);">0.21</div>
<div class="t" style="left:445.70px;top:139.70px;font-size:18.90px;color:#f4f4f4;transform:scaleX(0.6050);">0.64</div>
<div class="t" style="left:498.50px;top:139.70px;font-size:18.90px;color:#f4f4f4;transform:scaleX(0.6050);">0.30</div>
<div class="t" style="left:563.00px;top:139.70px;font-size:18.90px;color:#f4f4f4;transform:scaleX(0.6050);">0.15</div>
<div class="t" style="left:618.90px;top:139.70px;font-size:18.90px;color:#f4f4f4;transform:scaleX(0.6050);">0.22</div>
<div class="t" style="left:676.80px;top:139.70px;font-size:18.90px;color:#f4f4f4;transform:scaleX(0.6050);">0.32</div>
<div class="t" style="left:754.70px;top:139.70px;font-size:18.90px;color:#f4f4f4;transform:scaleX(0.6050);">0.42</div>
<div class="t" style="left:820.30px;top:139.70px;font-size:18.90px;color:#f4f4f4;transform:scaleX(0.6050);">0.47</div>
<div class="t" style="left:855.00px;top:139.70px;font-size:18.90px;color:#f4f4f4;transform:scaleX(0.6050);">0.43</div>
<div class="t" style="left:889.60px;top:139.70px;font-size:18.90px;color:#f4f4f4;transform:scaleX(0.6050);">0.39</div>
<div class="t" style="left:931.20px;top:139.70px;font-size:18.90px;color:#f4f4f4;transform:scaleX(0.6050);">0.38</div>
<div class="t" style="left:972.40px;top:139.70px;font-size:18.90px;color:#f4f4f4;transform:scaleX(0.6050);">0.43</div>
<div class="t" style="left:1013.60px;top:139.70px;font-size:18.90px;color:#f4f4f4;transform:scaleX(0.6050);">0.43</div>
<div class="t" style="left:1048.20px;top:139.70px;font-size:18.90px;color:#f4f4f4;transform:scaleX(0.6050);">0.46</div>
<div class="t" style="left:1082.80px;top:139.70px;font-size:18.90px;color:#f4f4f4;transform:scaleX(0.6050);">0.41</div>
<div class="t" style="left:1118.20px;top:139.70px;font-size:18.90px;color:#f4f4f4;transform:scaleX(0.6050);">0.51</div>
<div class="t" style="left:1152.80px;top:139.70px;font-size:18.90px;color:#f4f4f4;transform:scaleX(0.6050);">0.45</div>
<div class="t" style="left:1187.50px;top:139.70px;font-size:18.90px;color:#f4f4f4;transform:scaleX(0.6050);">0.43</div>
<div class="t" style="left:1222.80px;top:139.70px;font-size:18.90px;color:#f4f4f4;transform:scaleX(0.6050);">0.45</div>
<div class="t" style="left:1264.00px;top:139.70px;font-size:18.90px;color:#f4f4f4;transform:scaleX(0.6050);">0.41</div>
<div class="t" style="left:1298.60px;top:139.70px;font-size:18.90px;color:#f4f4f4;transform:scaleX(0.6050);">0.42</div>
<div class="t" style="left:1333.30px;top:139.70px;font-size:18.90px;color:#f4f4f4;transform:scaleX(0.6050);">0.42</div>
<div class="t" style="left:1368.00px;top:139.70px;font-size:18.90px;color:#f4f4f4;transform:scaleX(0.6050);">0.47</div>
<div class="t" style="left:36.90px;top:171.80px;font-size:18.90px;color:#f4f4f4;transform:scaleX(0.6050);">0.22</div>
<div class="t" style="left:73.60px;top:171.80px;font-size:18.90px;color:#f4f4f4;transform:scaleX(0.6050);">0.49</div>
<div class="t" style="left:142.00px;top:171.80px;font-size:18.90px;color:#f4f4f4;transform:scaleX(0.6050);">0.44</div>
<div class="t" style="left:216.20px;top:171.80px;font-size:18.90px;color:#f4f4f4;transform:scaleX(0.6050);">0.14</div>
<div class="t" style="left:251.40px;top:171.80px;font-size:18.90px;color:#f4f4f4;transform:scaleX(0.6050);">0.49</div>
<div class="t" style="left:286.40px;top:171.80px;font-size:18.90px;color:#f4f4f4;transform:scaleX(0.6050);">0.32</div>
<div class="t" style="left:321.00px;top:171.80px;font-size:18.90px;color:#f4f4f4;transform:scaleX(0.6050);">0.47</div>
<div class="t" style="left:362.60px;top:171.80px;font-size:18.90px;color:#f4f4f4;transform:scaleX(0.6050);">0.25</div>
<div class="t" style="left:410.70px;top:171.80px;font-size:18.90px;color:#f4f4f4;transform:scaleX(0.6050);">0.27</div>
<div class="t" style="left:445.70px;top:171.80px;font-size:18.90px;color:#f4f4f4;transform:scaleX(0.6050);">0.33</div>
<div class="t" style="left:498.50px;top:171.80px;font-size:18.90px;color:#f4f4f4;transform:scaleX(0.6050);">0.60</div>
<div class="t" style="left:563.00px;top:171.80px;font-size:18.90px;color:#f4f4f4;transform:scaleX(0.6050);">0.06</div>
<div class="t" style="left:618.90px;top:171.80px;font-size:18.90px;color:#f4f4f4;transform:scaleX(0.6050);">0.33</div>
<div class="t" style="left:676.80px;top:171.80px;font-size:18.90px;color:#f4f4f4;transform:scaleX(0.6050);">0.15</div>
<div class="t" style="left:754.70px;top:171.80px;font-size:18.90px;color:#f4f4f4;transform:scaleX(0.6050);">0.51</div>
<div class="t" style="left:820.30px;top:171.80px;font-size:18.90px;color:#f4f4f4;transform:scaleX(0.6050);">0.38</div>
<div class="t" style="left:855.00px;top:171.80px;font-size:18.90px;color:#f4f4f4;transform:scaleX(0.6050);">0.38</div>
<div class="t" style="left:889.60px;top:171.80px;font-size:18.90px;color:#f4f4f4;transform:scaleX(0.6050);">0.38</div>
<div class="t" style="left:931.20px;top:171.80px;font-size:18.90px;color:#f4f4f4;transform:scaleX(0.6050);">0.36</div>
<div class="t" style="left:972.40px;top:171.80px;font-size:18.90px;color:#f4f4f4;transform:scaleX(0.6050);">0.38</div>
<div class="t" style="left:1013.60px;top:171.80px;font-size:18.90px;color:#f4f4f4;transform:scaleX(0.6050);">0.39</div>
<div class="t" style="left:1048.20px;top:171.80px;font-size:18.90px;color:#f4f4f4;transform:scaleX(0.6050);">0.40</div>
<div class="t" style="left:1082.80px;top:171.80px;font-size:18.90px;color:#f4f4f4;transform:scaleX(0.6050);">0.37</div>
<div class="t" style="left:1118.20px;top:171.80px;font-size:18.90px;color:#f4f4f4;transform:scaleX(0.6050);">0.40</div>
<div class="t" style="left:1152.80px;top:171.80px;font-size:18.90px;color:#f4f4f4;transform:scaleX(0.6050);">0.38</div>
<div class="t" style="left:1187.50px;top:171.80px;font-size:18.90px;color:#f4f4f4;transform:scaleX(0.6050);">0.37</div>
<div class="t" style="left:1222.80px;top:171.80px;font-size:18.90px;color:#f4f4f4;transform:scaleX(0.6050);">0.37</div>
<div class="t" style="left:1264.00px;top:171.80px;font-size:18.90px;color:#f4f4f4;transform:scaleX(0.6050);">0.38</div>
<div class="t" style="left:1298.60px;top:171.80px;font-size:18.90px;color:#f4f4f4;transform:scaleX(0.6050);">0.37</div>
<div class="t" style="left:1333.30px;top:171.80px;font-size:18.90px;color:#f4f4f4;transform:scaleX(0.6050);">0.38</div>
<div class="t" style="left:1368.00px;top:171.80px;font-size:18.90px;color:#f4f4f4;transform:scaleX(0.6050);">0.40</div>
<div class="t" style="left:36.90px;top:203.90px;font-size:18.90px;color:#f4f4f4;transform:scaleX(0.6050);">17.53</div>
<div class="t" style="left:73.60px;top:203.90px;font-size:18.90px;color:#f4f4f4;transform:scaleX(0.6050);">112.31</div>
<div class="t" style="left:142.00px;top:203.90px;font-size:18.90px;color:#f4f4f4;transform:scaleX(0.6050);">111.67</div>
<div class="t" style="left:216.20px;top:203.90px;font-size:18.90px;color:#f4f4f4;transform:scaleX(0.6050);">16.40</div>
<div class="t" style="left:251.40px;top:203.90px;font-size:18.90px;color:#f4f4f4;transform:scaleX(0.6050);">60.34</div>
<div class="t" style="left:286.40px;top:203.90px;font-size:18.90px;color:#f4f4f4;transform:scaleX(0.6050);">30.63</div>
<div class="t" style="left:321.00px;top:203.90px;font-size:18.90px;color:#f4f4f4;transform:scaleX(0.6050);">154.88</div>
<div class="t" style="left:362.60px;top:203.90px;font-size:18.90px;color:#f4f4f4;transform:scaleX(0.6050);">49.45</div>
<div class="t" style="left:410.70px;top:203.90px;font-size:18.90px;color:#f4f4f4;transform:scaleX(0.6050);">51.00</div>
<div class="t" style="left:445.70px;top:203.90px;font-size:18.90px;color:#f4f4f4;transform:scaleX(0.6050);">55.86</div>
<div class="t" style="left:498.50px;top:203.90px;font-size:18.90px;color:#f4f4f4;transform:scaleX(0.6050);">187.85</div>
<div class="t" style="left:563.00px;top:203.90px;font-size:18.90px;color:#f4f4f4;transform:scaleX(0.6050);">18.96</div>
<div class="t" style="left:618.90px;top:203.90px;font-size:18.90px;color:#f4f4f4;transform:scaleX(0.6050);">206.81</div>
<div class="t" style="left:676.80px;top:203.90px;font-size:18.90px;color:#f4f4f4;transform:scaleX(0.6050);">74.82</div>
<div class="t" style="left:754.70px;top:203.90px;font-size:18.90px;color:#f4f4f4;transform:scaleX(0.6050);">243.71</div>
<div class="t" style="left:820.30px;top:203.90px;font-size:18.90px;color:#f4f4f4;transform:scaleX(0.6050);">19.05</div>
<div class="t" style="left:855.00px;top:203.90px;font-size:18.90px;color:#f4f4f4;transform:scaleX(0.6050);">83.99</div>
<div class="t" style="left:889.60px;top:203.90px;font-size:18.90px;color:#f4f4f4;transform:scaleX(0.6050);">169.18</div>
<div class="t" style="left:931.20px;top:203.90px;font-size:18.90px;color:#f4f4f4;transform:scaleX(0.6050);">170.87</div>
<div class="t" style="left:972.40px;top:203.90px;font-size:18.90px;color:#f4f4f4;transform:scaleX(0.6050);">132.34</div>
<div class="t" style="left:1013.60px;top:203.90px;font-size:18.90px;color:#f4f4f4;transform:scaleX(0.6050);">83.20</div>
<div class="t" style="left:1048.20px;top:203.90px;font-size:18.90px;color:#f4f4f4;transform:scaleX(0.6050);">36.08</div>
<div class="t" style="left:1082.80px;top:203.90px;font-size:18.90px;color:#f4f4f4;transform:scaleX(0.6050);">95.40</div>
<div class="t" style="left:1118.20px;top:203.90px;font-size:18.90px;color:#f4f4f4;transform:scaleX(0.6050);">38.10</div>
<div class="t" style="left:1152.80px;top:203.90px;font-size:18.90px;color:#f4f4f4;transform:scaleX(0.6050);">83.65</div>
<div class="t" style="left:1187.50px;top:203.90px;font-size:18.90px;color:#f4f4f4;transform:scaleX(0.6050);">86.04</div>
<div class="t" style="left:1222.80px;top:203.90px;font-size:18.90px;color:#f4f4f4;transform:scaleX(0.6050);">116.49</div>
<div class="t" style="left:1264.00px;top:203.90px;font-size:18.90px;color:#f4f4f4;transform:scaleX(0.6050);">86.29</div>
<div class="t" style="left:1298.60px;top:203.90px;font-size:18.90px;color:#f4f4f4;transform:scaleX(0.6050);">84.68</div>
<div class="t" style="left:1333.30px;top:203.90px;font-size:18.90px;color:#f4f4f4;transform:scaleX(0.6050);">88.01</div>
<div class="t" style="left:1368.00px;top:203.90px;font-size:18.90px;color:#f4f4f4;transform:scaleX(0.6050);">24.17</div>
<div class="t" style="left:36.90px;top:236.00px;font-size:18.90px;color:#f4f4f4;transform:scaleX(0.6050);">6.51</div>
<div class="t" style="left:73.60px;top:236.00px;font-size:18.90px;color:#f4f4f4;transform:scaleX(0.6050);">4.69</div>
<div class="t" style="left:142.00px;top:236.00px;font-size:18.90px;color:#f4f4f4;transform:scaleX(0.6050);">3.32</div>
<div class="t" style="left:216.20px;top:236.00px;font-size:18.90px;color:#f4f4f4;transform:scaleX(0.6050);">7.59</div>
<div class="t" style="left:251.40px;top:236.00px;font-size:18.90px;color:#f4f4f4;transform:scaleX(0.6050);">5.39</div>
<div class="t" style="left:286.40px;top:236.00px;font-size:18.90px;color:#f4f4f4;transform:scaleX(0.6050);">4.71</div>
<div class="t" style="left:321.00px;top:236.00px;font-size:18.90px;color:#f4f4f4;transform:scaleX(0.6050);">3.16</div>
<div class="t" style="left:362.60px;top:236.00px;font-size:18.90px;color:#f4f4f4;transform:scaleX(0.6050);">5.81</div>
<div class="t" style="left:410.70px;top:236.00px;font-size:18.90px;color:#f4f4f4;transform:scaleX(0.6050);">3.76</div>
<div class="t" style="left:445.70px;top:236.00px;font-size:18.90px;color:#f4f4f4;transform:scaleX(0.6050);">9.85</div>
<div class="t" style="left:498.50px;top:236.00px;font-size:18.90px;color:#f4f4f4;transform:scaleX(0.6050);">7.79</div>
<div class="t" style="left:563.00px;top:236.00px;font-size:18.90px;color:#f4f4f4;transform:scaleX(0.6050);">18.26</div>
<div class="t" style="left:618.90px;top:236.00px;font-size:18.90px;color:#f4f4f4;transform:scaleX(0.6050);">5.70</div>
<div class="t" style="left:676.80px;top:236.00px;font-size:18.90px;color:#f4f4f4;transform:scaleX(0.6050);">9.41</div>
<div class="t" style="left:754.70px;top:236.00px;font-size:18.90px;color:#f4f4f4;transform:scaleX(0.6050);">4.38</div>
<div class="t" style="left:820.30px;top:236.00px;font-size:18.90px;color:#f4f4f4;transform:scaleX(0.6050);">2.64</div>
<div class="t" style="left:855.00px;top:236.00px;font-size:18.90px;color:#f4f4f4;transform:scaleX(0.6050);">3.35</div>
<div class="t" style="left:889.60px;top:236.00px;font-size:18.90px;color:#f4f4f4;transform:scaleX(0.6050);">3.65</div>
<div class="t" style="left:931.20px;top:236.00px;font-size:18.90px;color:#f4f4f4;transform:scaleX(0.6050);">3.84</div>
<div class="t" style="left:972.40px;top:236.00px;font-size:18.90px;color:#f4f4f4;transform:scaleX(0.6050);">3.76</div>
<div class="t" style="left:1013.60px;top:236.00px;font-size:18.90px;color:#f4f4f4;transform:scaleX(0.6050);">3.05</div>
<div class="t" style="left:1048.20px;top:236.00px;font-size:18.90px;color:#f4f4f4;transform:scaleX(0.6050);">2.47</div>
<div class="t" style="left:1082.80px;top:236.00px;font-size:18.90px;color:#f4f4f4;transform:scaleX(0.6050);">3.01</div>
<div class="t" style="left:1118.20px;top:236.00px;font-size:18.90px;color:#f4f4f4;transform:scaleX(0.6050);">3.50</div>
<div class="t" style="left:1152.80px;top:236.00px;font-size:18.90px;color:#f4f4f4;transform:scaleX(0.6050);">3.77</div>
<div class="t" style="left:1187.50px;top:236.00px;font-size:18.90px;color:#f4f4f4;transform:scaleX(0.6050);">3.52</div>
<div class="t" style="left:1222.80px;top:236.00px;font-size:18.90px;color:#f4f4f4;transform:scaleX(0.6050);">4.36</div>
<div class="t" style="left:1264.00px;top:236.00px;font-size:18.90px;color:#f4f4f4;transform:scaleX(0.6050);">3.11</div>
<div class="t" style="left:1298.60px;top:236.00px;font-size:18.90px;color:#f4f4f4;transform:scaleX(0.6050);">3.27</div>
<div class="t" style="left:1333.30px;top:236.00px;font-size:18.90px;color:#f4f4f4;transform:scaleX(0.6050);">3.22</div>
<div class="t" style="left:1368.00px;top:236.00px;font-size:18.90px;color:#f4f4f4;transform:scaleX(0.6050);">2.51</div>
</div>
<div class="a" style="left:541px;top:1081px;width:1377px;height:21px;background:#5e5e5e"></div>
<div class="a" style="left:542px;top:1083px;width:11px;height:17px;border-radius:3px;background:#777;border:1px solid #6a6a6a;box-sizing:border-box"></div>
<svg class="a" style="left:545px;top:1087px" width="5" height="9"><path d="M5 0V9L0 4.5Z" fill="#444"/></svg>
<div class="a" style="left:1037px;top:1084px;width:839px;height:15px;border-radius:7px;background:#4a4a4a"></div>
<div class="a" style="left:1906px;top:1083px;width:11px;height:17px;border-radius:3px;background:#777;border:1px solid #6a6a6a;box-sizing:border-box"></div>
<svg class="a" style="left:1909px;top:1087px" width="5" height="9"><path d="M0 0V9L5 4.5Z" fill="#444"/></svg>
<div class="a" style="left:200px;top:1102px;width:1397px;height:68px;background:#333"></div>
<div class="a" style="left:200px;top:1102px;width:1397px;height:56px;overflow:hidden">
<div class="a" style="left:0.8px;top:5.8px;width:50px;height:49px;border-radius:5px 5px 2px 2px;background:linear-gradient(#aaa,#9a9a9a 30%,#8a8a8a 60%,#666 100%)"></div>
<div class="a" style="left:6.6px;top:11px;width:39.4px;height:24.4px;border-radius:3px;background:#ffffff;box-shadow:inset 1px 1px 1px rgba(0,0,0,.35)"></div>
<div class="t" style="left:12.21px;top:40.37px;font-size:11.48px;color:#1e1e1e;font-weight:bold;transform:scaleX(0.8700);">White</div>
<div class="a" style="left:52.8px;top:5.8px;width:50px;height:49px;border-radius:5px 5px 2px 2px;background:linear-gradient(#aaa,#9a9a9a 30%,#8a8a8a 60%,#666 100%)"></div>
<div class="a" style="left:58.6px;top:11px;width:39.4px;height:24.4px;border-radius:3px;background:#e6e6e6;box-shadow:inset 1px 1px 1px rgba(0,0,0,.35)"></div>
<div class="t" style="left:59.47px;top:40.37px;font-size:11.48px;color:#1e1e1e;font-weight:bold;transform:scaleX(0.8700);">Gray 80</div>
<div class="a" style="left:104.8px;top:5.8px;width:50px;height:49px;border-radius:5px 5px 2px 2px;background:linear-gradient(#aaa,#9a9a9a 30%,#8a8a8a 60%,#666 100%)"></div>
<div class="a" style="left:110.6px;top:11px;width:39.4px;height:24.4px;border-radius:3px;background:#d2d2d2;box-shadow:inset 1px 1px 1px rgba(0,0,0,.35)"></div>
<div class="t" style="left:111.47px;top:40.37px;font-size:11.48px;color:#1e1e1e;font-weight:bold;transform:scaleX(0.8700);">Gray 65</div>
<div class="a" style="left:156.8px;top:5.8px;width:50px;height:49px;border-radius:5px 5px 2px 2px;background:linear-gradient(#aaa,#9a9a9a 30%,#8a8a8a 60%,#666 100%)"></div>
<div class="a" style="left:162.6px;top:11px;width:39.4px;height:24.4px;border-radius:3px;background:#bcbcbc;box-shadow:inset 1px 1px 1px rgba(0,0,0,.35)"></div>
<div class="t" style="left:163.47px;top:40.37px;font-size:11.48px;color:#1e1e1e;font-weight:bold;transform:scaleX(0.8700);">Gray 50</div>
<div class="a" style="left:208.8px;top:5.8px;width:50px;height:49px;border-radius:5px 5px 2px 2px;background:linear-gradient(#aaa,#9a9a9a 30%,#8a8a8a 60%,#666 100%)"></div>
<div class="a" style="left:214.6px;top:11px;width:39.4px;height:24.4px;border-radius:3px;background:#a4a4a4;box-shadow:inset 1px 1px 1px rgba(0,0,0,.35)"></div>
<div class="t" style="left:215.47px;top:40.37px;font-size:11.48px;color:#1e1e1e;font-weight:bold;transform:scaleX(0.8700);">Gray 35</div>
<div class="a" style="left:260.8px;top:5.8px;width:50px;height:49px;border-radius:5px 5px 2px 2px;background:linear-gradient(#aaa,#9a9a9a 30%,#8a8a8a 60%,#666 100%)"></div>
<div class="a" style="left:266.6px;top:11px;width:39.4px;height:24.4px;border-radius:3px;background:#000000;box-shadow:inset 1px 1px 1px rgba(0,0,0,.35)"></div>
<div class="t" style="left:272.47px;top:40.37px;font-size:11.48px;color:#1e1e1e;font-weight:bold;transform:scaleX(0.8700);">Black</div>
<div class="a" style="left:312.8px;top:5.8px;width:50px;height:49px;border-radius:5px 5px 2px 2px;background:linear-gradient(#aaa,#9a9a9a 30%,#8a8a8a 60%,#666 100%)"></div>
<div class="a" style="left:318.6px;top:11px;width:39.4px;height:24.4px;border-radius:3px;background:#735244;box-shadow:inset 1px 1px 1px rgba(0,0,0,.35)"></div>
<div class="t" style="left:314.76px;top:40.37px;font-size:11.48px;color:#1e1e1e;font-weight:bold;transform:scaleX(0.8700);">Dark Skin</div>
<div class="a" style="left:364.8px;top:5.8px;width:50px;height:49px;border-radius:5px 5px 2px 2px;background:linear-gradient(#aaa,#9a9a9a 30%,#8a8a8a 60%,#666 100%)"></div>
<div class="a" style="left:370.6px;top:11px;width:39.4px;height:24.4px;border-radius:3px;background:#c29582;box-shadow:inset 1px 1px 1px rgba(0,0,0,.35)"></div>
<div class="t" style="left:365.80px;top:40.37px;font-size:11.48px;color:#1e1e1e;font-weight:bold;transform:scaleX(0.8649);">Light Skin</div>
<div class="a" style="left:416.8px;top:5.8px;width:50px;height:49px;border-radius:5px 5px 2px 2px;background:linear-gradient(#aaa,#9a9a9a 30%,#8a8a8a 60%,#666 100%)"></div>
<div class="a" style="left:422.6px;top:11px;width:39.4px;height:24.4px;border-radius:3px;background:#5e7aa2;box-shadow:inset 1px 1px 1px rgba(0,0,0,.35)"></div>
<div class="t" style="left:420.70px;top:40.37px;font-size:11.48px;color:#1e1e1e;font-weight:bold;transform:scaleX(0.8700);">Blue Sky</div>
<div class="a" style="left:468.8px;top:5.8px;width:50px;height:49px;border-radius:5px 5px 2px 2px;background:linear-gradient(#aaa,#9a9a9a 30%,#8a8a8a 60%,#666 100%)"></div>
<div class="a" style="left:474.6px;top:11px;width:39.4px;height:24.4px;border-radius:3px;background:#5a6e42;box-shadow:inset 1px 1px 1px rgba(0,0,0,.35)"></div>
<div class="t" style="left:476.32px;top:40.37px;font-size:11.48px;color:#1e1e1e;font-weight:bold;transform:scaleX(0.8700);">Foliage</div>
<div class="a" style="left:520.8px;top:5.8px;width:50px;height:49px;border-radius:5px 5px 2px 2px;background:linear-gradient(#aaa,#9a9a9a 30%,#8a8a8a 60%,#666 100%)"></div>
<div class="a" style="left:526.6px;top:11.5px;width:39px;height:11.5px;border-radius:3px;background:#8482bc;box-shadow:inset 1px 1px 1px rgba(0,0,0,.35)"></div>
<div class="t" style="left:529.70px;top:28.67px;font-size:11.48px;color:#1e1e1e;font-weight:bold;transform:scaleX(0.8700);">Blue</div>
<div class="t" style="left:529.70px;top:40.37px;font-size:11.48px;color:#1e1e1e;font-weight:bold;transform:scaleX(0.8700);">Flower</div>
<div class="a" style="left:572.8px;top:5.8px;width:50px;height:49px;border-radius:5px 5px 2px 2px;background:linear-gradient(#aaa,#9a9a9a 30%,#8a8a8a 60%,#666 100%)"></div>
<div class="a" style="left:578.6px;top:11.5px;width:39px;height:11.5px;border-radius:3px;background:#62bea8;box-shadow:inset 1px 1px 1px rgba(0,0,0,.35)"></div>
<div class="t" style="left:582.54px;top:28.67px;font-size:11.48px;color:#1e1e1e;font-weight:bold;transform:scaleX(0.8700);">Bluish</div>
<div class="t" style="left:582.54px;top:40.37px;font-size:11.48px;color:#1e1e1e;font-weight:bold;transform:scaleX(0.8700);">Green</div>
<div class="a" style="left:624.8px;top:5.8px;width:50px;height:49px;border-radius:5px 5px 2px 2px;background:linear-gradient(#aaa,#9a9a9a 30%,#8a8a8a 60%,#666 100%)"></div>
<div class="a" style="left:630.6px;top:11px;width:39.4px;height:24.4px;border-radius:3px;background:#e07820;box-shadow:inset 1px 1px 1px rgba(0,0,0,.35)"></div>
<div class="t" style="left:632.31px;top:40.37px;font-size:11.48px;color:#1e1e1e;font-weight:bold;transform:scaleX(0.8700);">Orange</div>
<div class="a" style="left:676.8px;top:5.8px;width:50px;height:49px;border-radius:5px 5px 2px 2px;background:linear-gradient(#aaa,#9a9a9a 30%,#8a8a8a 60%,#666 100%)"></div>
<div class="a" style="left:682.6px;top:11.5px;width:39px;height:11.5px;border-radius:3px;background:#4a5aaa;box-shadow:inset 1px 1px 1px rgba(0,0,0,.35)"></div>
<div class="t" style="left:681.82px;top:28.67px;font-size:11.48px;color:#1e1e1e;font-weight:bold;transform:scaleX(0.8700);">Purplish</div>
<div class="t" style="left:681.82px;top:40.37px;font-size:11.48px;color:#1e1e1e;font-weight:bold;transform:scaleX(0.8700);">Blue</div>
<div class="a" style="left:728.8px;top:5.8px;width:50px;height:49px;border-radius:5px 5px 2px 2px;background:linear-gradient(#aaa,#9a9a9a 30%,#8a8a8a 60%,#666 100%)"></div>
<div class="a" style="left:734.6px;top:11.5px;width:39px;height:11.5px;border-radius:3px;background:#c85868;box-shadow:inset 1px 1px 1px rgba(0,0,0,.35)"></div>
<div class="t" style="left:731.60px;top:28.67px;font-size:11.48px;color:#1e1e1e;font-weight:bold;transform:scaleX(0.8700);">Moderate</div>
<div class="t" style="left:731.60px;top:40.37px;font-size:11.48px;color:#1e1e1e;font-weight:bold;transform:scaleX(0.8700);">Red</div>
<div class="a" style="left:780.8px;top:5.8px;width:50px;height:49px;border-radius:5px 5px 2px 2px;background:linear-gradient(#aaa,#9a9a9a 30%,#8a8a8a 60%,#666 100%)"></div>
<div class="a" style="left:786.6px;top:11px;width:39.4px;height:24.4px;border-radius:3px;background:#5c3c6e;box-shadow:inset 1px 1px 1px rgba(0,0,0,.35)"></div>
<div class="t" style="left:790.26px;top:40.37px;font-size:11.48px;color:#1e1e1e;font-weight:bold;transform:scaleX(0.8700);">Purple</div>
<div class="a" style="left:832.8px;top:5.8px;width:50px;height:49px;border-radius:5px 5px 2px 2px;background:linear-gradient(#aaa,#9a9a9a 30%,#8a8a8a 60%,#666 100%)"></div>
<div class="a" style="left:838.6px;top:11.5px;width:39px;height:11.5px;border-radius:3px;background:#a0c040;box-shadow:inset 1px 1px 1px rgba(0,0,0,.35)"></div>
<div class="t" style="left:842.25px;top:28.67px;font-size:11.48px;color:#1e1e1e;font-weight:bold;transform:scaleX(0.8700);">Yellow</div>
<div class="t" style="left:842.25px;top:40.37px;font-size:11.48px;color:#1e1e1e;font-weight:bold;transform:scaleX(0.8700);">Green</div>
<div class="a" style="left:884.8px;top:5.8px;width:50px;height:49px;border-radius:5px 5px 2px 2px;background:linear-gradient(#aaa,#9a9a9a 30%,#8a8a8a 60%,#666 100%)"></div>
<div class="a" style="left:890.6px;top:11.5px;width:39px;height:11.5px;border-radius:3px;background:#e8a030;box-shadow:inset 1px 1px 1px rgba(0,0,0,.35)"></div>
<div class="t" style="left:892.31px;top:28.67px;font-size:11.48px;color:#1e1e1e;font-weight:bold;transform:scaleX(0.8700);">Orange</div>
<div class="t" style="left:892.31px;top:40.37px;font-size:11.48px;color:#1e1e1e;font-weight:bold;transform:scaleX(0.8700);">Yellow</div>
<div class="a" style="left:936.8px;top:5.8px;width:50px;height:49px;border-radius:5px 5px 2px 2px;background:linear-gradient(#aaa,#9a9a9a 30%,#8a8a8a 60%,#666 100%)"></div>
<div class="a" style="left:942.6px;top:11px;width:39.4px;height:24.4px;border-radius:3px;background:#3040a0;box-shadow:inset 1px 1px 1px rgba(0,0,0,.35)"></div>
<div class="t" style="left:950.98px;top:40.37px;font-size:11.48px;color:#1e1e1e;font-weight:bold;transform:scaleX(0.8700);">Blue</div>
<div class="a" style="left:988.8px;top:5.8px;width:50px;height:49px;border-radius:5px 5px 2px 2px;background:linear-gradient(#aaa,#9a9a9a 30%,#8a8a8a 60%,#666 100%)"></div>
<div class="a" style="left:994.6px;top:11px;width:39.4px;height:24.4px;border-radius:3px;background:#48a048;box-shadow:inset 1px 1px 1px rgba(0,0,0,.35)"></div>
<div class="t" style="left:999.36px;top:40.37px;font-size:11.48px;color:#1e1e1e;font-weight:bold;transform:scaleX(0.8700);">Green</div>
<div class="a" style="left:1040.8px;top:5.8px;width:50px;height:49px;border-radius:5px 5px 2px 2px;background:linear-gradient(#aaa,#9a9a9a 30%,#8a8a8a 60%,#666 100%)"></div>
<div class="a" style="left:1046.6px;top:11px;width:39.4px;height:24.4px;border-radius:3px;background:#b82830;box-shadow:inset 1px 1px 1px rgba(0,0,0,.35)"></div>
<div class="t" style="left:1056.36px;top:40.37px;font-size:11.48px;color:#1e1e1e;font-weight:bold;transform:scaleX(0.8700);">Red</div>
<div class="a" style="left:1092.8px;top:5.8px;width:50px;height:49px;border-radius:5px 5px 2px 2px;background:linear-gradient(#aaa,#9a9a9a 30%,#8a8a8a 60%,#666 100%)"></div>
<div class="a" style="left:1098.6px;top:11px;width:39.4px;height:24.4px;border-radius:3px;background:#f0c820;box-shadow:inset 1px 1px 1px rgba(0,0,0,.35)"></div>
<div class="t" style="left:1102.25px;top:40.37px;font-size:11.48px;color:#1e1e1e;font-weight:bold;transform:scaleX(0.8700);">Yellow</div>
<div class="a" style="left:1144.8px;top:5.8px;width:50px;height:49px;border-radius:5px 5px 2px 2px;background:linear-gradient(#aaa,#9a9a9a 30%,#8a8a8a 60%,#666 100%)"></div>
<div class="a" style="left:1150.6px;top:11px;width:39.4px;height:24.4px;border-radius:3px;background:#c050a0;box-shadow:inset 1px 1px 1px rgba(0,0,0,.35)"></div>
<div class="t" style="left:1149.54px;top:40.37px;font-size:11.48px;color:#1e1e1e;font-weight:bold;transform:scaleX(0.8700);">Magenta</div>
<div class="a" style="left:1196.8px;top:5.8px;width:50px;height:49px;border-radius:5px 5px 2px 2px;background:linear-gradient(#aaa,#9a9a9a 30%,#8a8a8a 60%,#666 100%)"></div>
<div class="a" style="left:1202.6px;top:11px;width:39.4px;height:24.4px;border-radius:3px;background:#1090b0;box-shadow:inset 1px 1px 1px rgba(0,0,0,.35)"></div>
<div class="t" style="left:1209.59px;top:40.37px;font-size:11.48px;color:#1e1e1e;font-weight:bold;transform:scaleX(0.8700);">Cyan</div>
<div class="a" style="left:1248.8px;top:5.8px;width:50px;height:49px;border-radius:5px 5px 2px 2px;background:linear-gradient(#aaa,#9a9a9a 30%,#8a8a8a 60%,#666 100%)"></div>
<div class="a" style="left:1254.6px;top:11px;width:39.4px;height:24.4px;border-radius:3px;background:#ff0000;box-shadow:inset 1px 1px 1px rgba(0,0,0,.35)"></div>
<div class="t" style="left:1250.20px;top:40.37px;font-size:11.48px;color:#1e1e1e;font-weight:bold;transform:scaleX(0.8700);">100% Red</div>
<div class="a" style="left:1300.8px;top:5.8px;width:50px;height:49px;border-radius:5px 5px 2px 2px;background:linear-gradient(#aaa,#9a9a9a 30%,#8a8a8a 60%,#666 100%)"></div>
<div class="a" style="left:1306.6px;top:11.5px;width:39px;height:11.5px;border-radius:3px;background:#00ff00;box-shadow:inset 1px 1px 1px rgba(0,0,0,.35)"></div>
<div class="t" style="left:1311.36px;top:28.67px;font-size:11.48px;color:#1e1e1e;font-weight:bold;transform:scaleX(0.8700);">100%</div>
<div class="t" style="left:1311.36px;top:40.37px;font-size:11.48px;color:#1e1e1e;font-weight:bold;transform:scaleX(0.8700);">Green</div>
<div class="a" style="left:1352.8px;top:5.8px;width:50px;height:49px;border-radius:5px 5px 2px 2px;background:linear-gradient(#aaa,#9a9a9a 30%,#8a8a8a 60%,#666 100%)"></div>
<div class="a" style="left:1358.6px;top:11.5px;width:39px;height:11.5px;border-radius:3px;background:#0000ff;box-shadow:inset 1px 1px 1px rgba(0,0,0,.35)"></div>
<div class="t" style="left:1365.02px;top:28.67px;font-size:11.48px;color:#1e1e1e;font-weight:bold;transform:scaleX(0.8700);">100%</div>
<div class="t" style="left:1365.02px;top:40.37px;font-size:11.48px;color:#1e1e1e;font-weight:bold;transform:scaleX(0.8700);">Blue</div>
</div>
<div class="a" style="left:200px;top:1158px;width:1397px;height:12px;background:#444"></div>
<div class="a" style="left:214px;top:1160px;width:780px;height:9px;border-radius:4px;background:#5a5a5a"></div>
<svg class="a" style="left:202px;top:1160px" width="10" height="10"><rect width="10" height="10" rx="2" fill="#666"/><path d="M7 1.5V8.5L3 5Z" fill="#333"/></svg>
<svg class="a" style="left:1582px;top:1158px" width="12" height="12"><rect width="12" height="12" rx="2" fill="#777"/><path d="M4 2V10L9 6Z" fill="#444"/></svg>
<div class="a" style="left:1597px;top:1100px;width:323px;height:70px;background:#2e2e2e"></div>
<div class="a" style="left:1645px;top:1101px;width:46px;height:37px;background:linear-gradient(#7a7a7a,#9a9a9a 40%,#6a6a6a);border-radius:3px"></div>
<div class="a" style="left:1656.5px;top:1106px;width:24px;height:24px;border-radius:50%;background:radial-gradient(circle at 50% 40%,#a8a8a8,#7a7a7a 70%,#6a6a6a)"></div>
<div class="a" style="left:1692px;top:1101px;width:44px;height:37px;background:linear-gradient(#7a7a7a,#9a9a9a 40%,#6a6a6a);border-radius:3px"></div>
<div class="a" style="left:1702.5px;top:1106px;width:24px;height:24px;border-radius:50%;background:radial-gradient(circle at 50% 40%,#a8a8a8,#7a7a7a 70%,#6a6a6a)"></div>
<div class="a" style="left:1737px;top:1101px;width:44px;height:37px;background:linear-gradient(#7a7a7a,#9a9a9a 40%,#6a6a6a);border-radius:3px"></div>
<div class="a" style="left:1747.5px;top:1106px;width:24px;height:24px;border-radius:50%;background:radial-gradient(circle at 50% 40%,#a8a8a8,#7a7a7a 70%,#6a6a6a)"></div>
<div class="a" style="left:1782px;top:1101px;width:44px;height:37px;background:linear-gradient(#7a7a7a,#9a9a9a 40%,#6a6a6a);border-radius:3px"></div>
<div class="a" style="left:1792.5px;top:1106px;width:24px;height:24px;border-radius:50%;background:radial-gradient(circle at 50% 40%,#a8a8a8,#7a7a7a 70%,#6a6a6a)"></div>
<div class="a" style="left:1838px;top:1106px;width:24px;height:24px;border-radius:50%;background:#3a3a3a"></div>
<div class="a" style="left:1883px;top:1106px;width:24px;height:24px;border-radius:50%;background:#3a3a3a"></div>
<div class="a" style="left:1597px;top:1126px;width:48px;height:44px;border-radius:4px 4px 0 0;background:linear-gradient(#a0a0a0,#8a8a8a 50%,#777)"></div>
<div class="a" style="left:1605px;top:1132.5px;width:31px;height:30.5px;border-radius:5px;border:2.5px solid #222;box-sizing:border-box;background:linear-gradient(#888,#aaa)"></div>
<div class="a" style="left:1614px;top:1141px;width:13px;height:13px;background:linear-gradient(#222 50%,#000 50%)"></div>
<div class="a" style="left:1646.5px;top:1139px;width:271.5px;height:31px;border-radius:4px 4px 0 0;background:linear-gradient(#b8b8b8,#a8a8a8 40%,#8e8e8e 100%)"></div>
<div class="a" style="left:1782px;top:1139px;width:1px;height:31px;background:#555"></div>
<div class="a" style="left:1667.2px;top:1144.5px;width:19px;height:19px;border-radius:50%;background:radial-gradient(circle at 50% 40%,#b0b0b0,#8a8a8a)"></div>
<div class="t" style="left:1672.25px;top:1146.36px;font-size:15.99px;color:#222;">«</div>
<div class="a" style="left:1881.0px;top:1144.5px;width:19px;height:19px;border-radius:50%;background:radial-gradient(circle at 50% 40%,#b0b0b0,#8a8a8a)"></div>
<div class="t" style="left:1886.05px;top:1146.36px;font-size:15.99px;color:#222;">»</div>
<div class="t" style="left:1703.50px;top:1142.35px;font-size:22.97px;color:#2a2a2a;font-weight:bold;transform:scaleX(0.9162);">Back</div>
<div class="t" style="left:1810.60px;top:1142.35px;font-size:22.97px;color:#2a2a2a;font-weight:bold;transform:scaleX(1.0326);">Next</div>
<svg class="a" style="left:1520px;top:1080px" width="400" height="90"><path d="M14 9 L75 21 L100 56 L30 72 Z" fill="none" stroke="rgba(225,225,225,.8)" stroke-width="8" stroke-linejoin="round"/><path d="M14 9 L75 21 L100 56 L30 72 Z" fill="none" stroke="rgb(168,60,68)" stroke-width="4.5" stroke-linejoin="round"/><path d="M30 28 L52 44 L72 8" fill="none" stroke="rgba(225,225,225,.8)" stroke-width="8" stroke-linejoin="round"/><path d="M30 28 L52 44 L72 8" fill="none" stroke="rgba(60,60,60,.9)" stroke-width="3.5" stroke-linejoin="round"/></svg>
<div class="t" style="left:1595.00px;top:1095.85px;font-size:34.88px;color:rgba(215,215,215,.7);font-weight:bold;transform:scaleX(0.9725);-webkit-text-stroke:4.5px rgba(215,215,215,.7);">NOTEBOOK</div>
<div class="t" style="left:1793.00px;top:1095.85px;font-size:34.88px;color:rgba(215,215,215,.7);font-weight:bold;transform:scaleX(0.9272);-webkit-text-stroke:4.5px rgba(215,215,215,.7);">CHECK</div>
<div class="t" style="left:1595.00px;top:1095.85px;font-size:34.88px;color:rgba(160,45,55,.85);font-weight:bold;transform:scaleX(0.9725);-webkit-text-stroke:1.5px rgba(160,45,55,.85);">NOTEBOOK</div>
<div class="t" style="left:1793.00px;top:1095.85px;font-size:34.88px;color:rgba(45,45,45,.8);font-weight:bold;transform:scaleX(0.9272);-webkit-text-stroke:1px rgba(45,45,45,.8);">CHECK</div>
<div class="a" style="left:1390px;top:58.5px;width:142.5px;height:29.5px;border-radius:0 5px 0 0;background:linear-gradient(#525252,#606060 50%,#6c6c6c)"></div>
<div class="a" style="left:1390px;top:59px;width:6px;height:29px;background:#22dd22"></div>
<div class="t" style="left:1398.70px;top:61.29px;font-size:10.76px;color:#eee;transform:scaleX(0.9783);">X-Rite i1Pro 2</div>
<div class="t" style="left:1398.70px;top:74.99px;font-size:10.76px;color:#eee;transform:scaleX(1.0241);">Direct View</div>
<div class="a" style="left:1467.5px;top:63px;width:20px;height:20px;border-radius:50%;background:linear-gradient(#474747,#5a5a5a 55%,#707070)"></div>
<svg class="a" style="left:1471.5px;top:71px" width="12" height="7"><path d="M0 0H12L6 6Z" fill="#fff"/></svg>
<div class="a" style="left:1497px;top:60px;width:1px;height:28px;background:#3e3e3e"></div>
<div class="a" style="left:1504.5px;top:60px;width:26px;height:26px;border-radius:50%;background:#0000ee;border:1px solid #ddd;box-sizing:border-box"></div>
<div class="t" style="left:1510.25px;top:68.78px;font-size:10.17px;color:#fff;transform:scaleX(0.8542);">233</div>
<div class="a" style="left:1538px;top:58.5px;width:130px;height:29.5px;border-radius:0 5px 0 0;background:linear-gradient(#525252,#606060 50%,#6c6c6c)"></div>
<div class="a" style="left:1538px;top:59px;width:6px;height:29px;background:#eeee00"></div>
<div class="t" style="left:1547.50px;top:61.17px;font-size:10.90px;color:#eee;transform:scaleX(0.9409);">Source</div>
<div class="a" style="left:1642.5px;top:63px;width:20px;height:20px;border-radius:50%;background:linear-gradient(#474747,#5a5a5a 55%,#707070)"></div>
<svg class="a" style="left:1646.5px;top:71px" width="12" height="7"><path d="M0 0H12L6 6Z" fill="#fff"/></svg>
<div class="a" style="left:1675px;top:58.5px;width:143px;height:29.5px;border-radius:0 5px 0 0;background:linear-gradient(#525252,#606060 50%,#6c6c6c)"></div>
<div class="a" style="left:1675px;top:59px;width:6px;height:29px;background:#eeee00"></div>
<div class="t" style="left:1683.70px;top:60.84px;font-size:11.05px;color:#eee;transform:scaleX(0.9811);">Direct Display Control</div>
<div class="a" style="left:1791.8px;top:63px;width:20px;height:20px;border-radius:50%;background:linear-gradient(#474747,#5a5a5a 55%,#707070)"></div>
<svg class="a" style="left:1795.8px;top:71px" width="12" height="7"><path d="M0 0H12L6 6Z" fill="#fff"/></svg>
<div class="a" style="left:1821px;top:58px;width:34px;height:28px;border-radius:4px;border:1px solid #c8c8c8;box-sizing:border-box;background:linear-gradient(#8e8e8e,#6a6a6a 60%,#5a5a5a)"></div>
<div class="a" style="left:1828px;top:62px;width:20px;height:20px;border-radius:50%;background:linear-gradient(#555,#6a6a6a 50%,#8a8a8a)"></div>
<div class="a" style="left:1857px;top:58px;width:34px;height:28px;border-radius:4px;border:1px solid #c8c8c8;box-sizing:border-box;background:linear-gradient(#8e8e8e,#6a6a6a 60%,#5a5a5a)"></div>
<div class="a" style="left:1864px;top:62px;width:20px;height:20px;border-radius:50%;background:linear-gradient(#555,#6a6a6a 50%,#8a8a8a)"></div>
<div class="a" style="left:1893px;top:58px;width:34px;height:28px;border-radius:4px;border:1px solid #c8c8c8;box-sizing:border-box;background:linear-gradient(#8e8e8e,#6a6a6a 60%,#5a5a5a)"></div>
<div class="a" style="left:1900px;top:62px;width:20px;height:20px;border-radius:50%;background:linear-gradient(#555,#6a6a6a 50%,#8a8a8a)"></div>
<svg class="a" style="left:1831px;top:65px" width="14" height="14" viewBox="-7 -7 14 14"><g fill="#ddd"><circle r="4.6"/><rect x="-1.4" y="-6.6" width="2.8" height="3" transform="rotate(0)"/><rect x="-1.4" y="-6.6" width="2.8" height="3" transform="rotate(45)"/><rect x="-1.4" y="-6.6" width="2.8" height="3" transform="rotate(90)"/><rect x="-1.4" y="-6.6" width="2.8" height="3" transform="rotate(135)"/><rect x="-1.4" y="-6.6" width="2.8" height="3" transform="rotate(180)"/><rect x="-1.4" y="-6.6" width="2.8" height="3" transform="rotate(225)"/><rect x="-1.4" y="-6.6" width="2.8" height="3" transform="rotate(270)"/><rect x="-1.4" y="-6.6" width="2.8" height="3" transform="rotate(315)"/></g><circle r="2.2" fill="#666"/></svg>
<div class="t" style="left:1870.00px;top:65.86px;font-size:15.99px;color:#eee;font-weight:bold;transform:scaleX(0.8191);">?</div>
<svg class="a" style="left:1906px;top:67px" width="6" height="10"><path d="M6 0V10L0 5Z" fill="#fff"/></svg>
</body></html>
